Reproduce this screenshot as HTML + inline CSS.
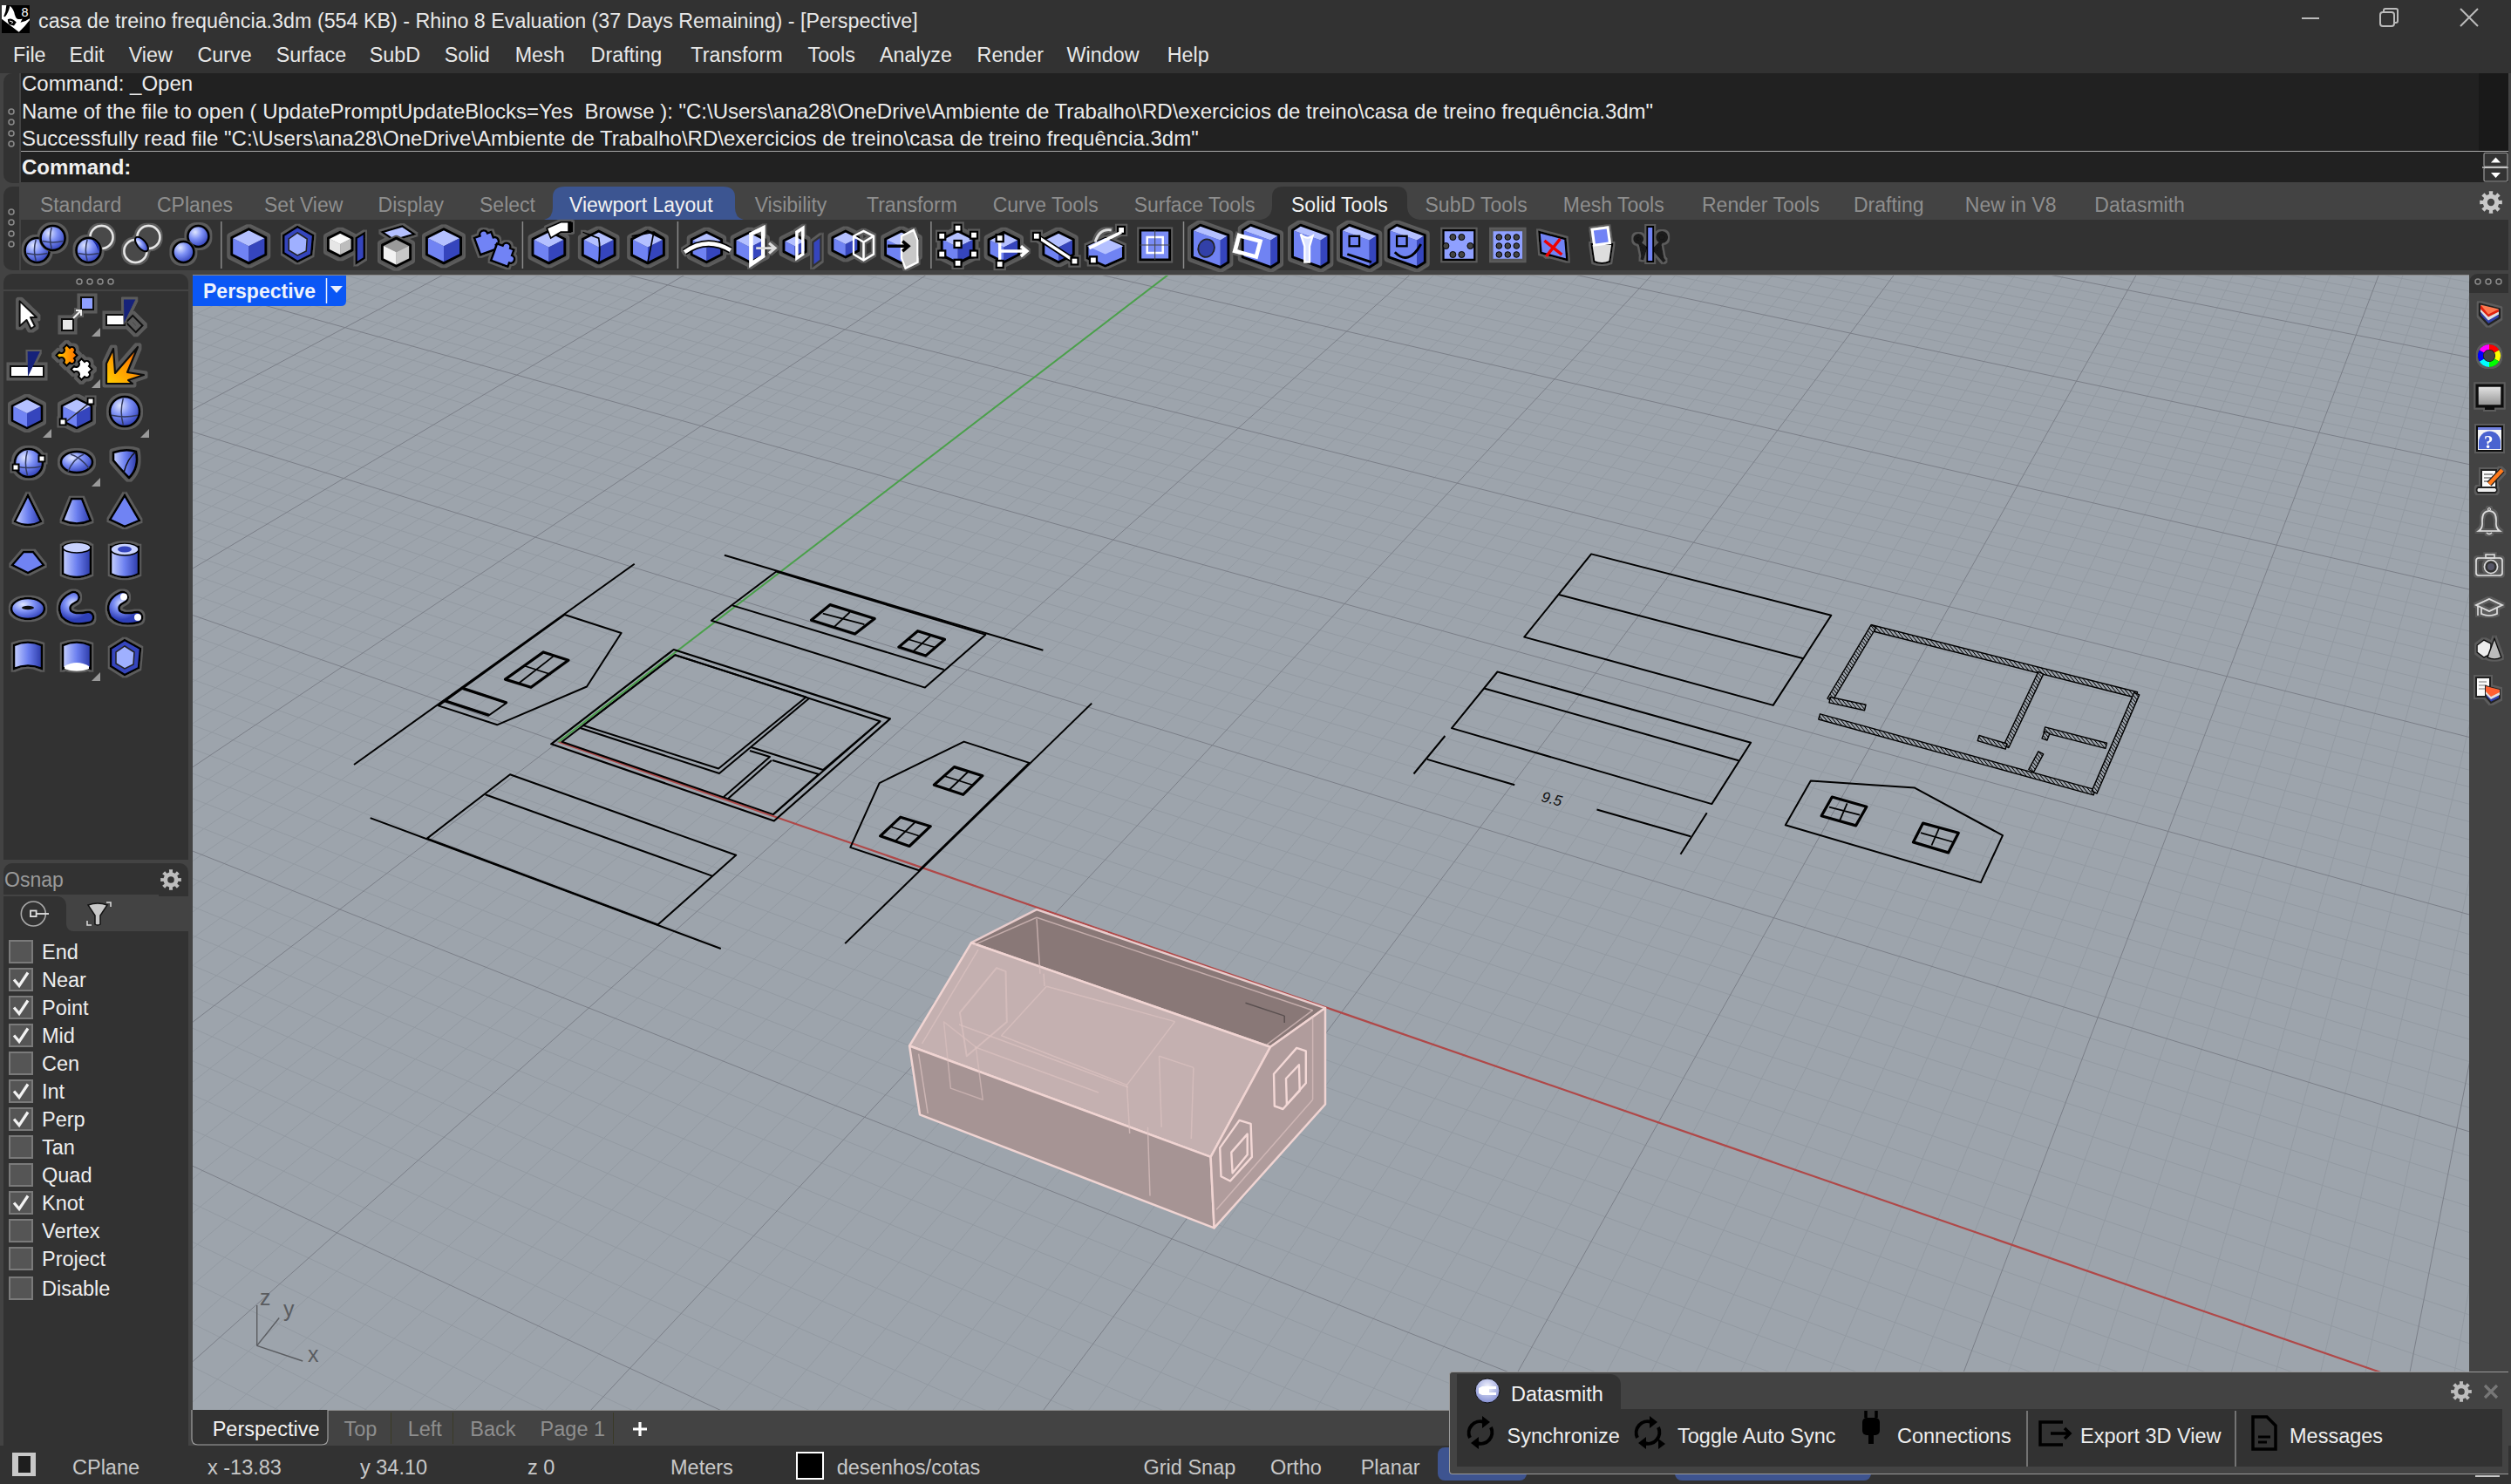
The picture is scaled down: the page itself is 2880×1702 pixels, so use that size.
<!DOCTYPE html><html><head><meta charset="utf-8"><style>html,body{margin:0;padding:0;width:2880px;height:1702px;overflow:hidden;background:#434343;font-family:"Liberation Sans", sans-serif;}div,svg{box-sizing:border-box}</style></head><body>
<div style="position:absolute;left:0px;top:0px;width:2880px;height:84px;background:#323232;"></div>
<svg style="position:absolute;left:2px;top:6px;" width="32" height="32" viewBox="0 0 32 32"><rect width="32" height="32" fill="#000"/><path d="M0 15.8 L0 0 H5.3 Q5 7 2.3 12.8 Q3 13.6 4 13 Q7.5 9 9.5 0.8 Q14 5 14.9 10.8 Q16 14.5 17.2 15.2 Q19.5 16.8 23.7 15.5 L21.5 19.8 Q27 19 32 15.3 V17 Q27 24 19.7 30.8 Z" fill="#fff"/><path d="M6.8 16.2 Q11 13.6 16.8 19.4 L14 23.6 Q11 22.6 8.6 22 Q6.8 19.5 6.8 16.2Z" fill="#000"/><path d="M9 18 L12.6 19.2 L11.5 21" stroke="#fff" stroke-width="1" fill="none"/><text x="22.6" y="12.6" font-size="14.5" fill="#fff" font-family="Liberation Sans">8</text></svg>
<div style="position:absolute;left:44px;top:8.0px;height:32px;line-height:32px;font-size:23.3px;color:#e8e8e8;font-weight:400;white-space:pre;">casa de treino frequência.3dm (554 KB) - Rhino 8 Evaluation (37 Days Remaining) - [Perspective]</div>
<svg style="position:absolute;left:2630px;top:8px;" width="230" height="30" viewBox="0 0 230 30"><line x1="10" y1="13" x2="30" y2="13" stroke="#bbb" stroke-width="2"/><rect x="100" y="6" width="16" height="16" rx="3" fill="none" stroke="#bbb" stroke-width="2"/><path d="M104 6 V4 Q104 2 106 2 H118 Q120 2 120 4 V16 Q120 18 118 18 H116" fill="none" stroke="#bbb" stroke-width="2"/><path d="M192 2 L212 22 M212 2 L192 22" stroke="#bbb" stroke-width="2"/></svg>
<div style="position:absolute;left:15px;top:47.0px;height:32px;line-height:32px;font-size:23.3px;color:#e8e8e8;font-weight:400;white-space:pre;">File</div>
<div style="position:absolute;left:79.4px;top:47.0px;height:32px;line-height:32px;font-size:23.3px;color:#e8e8e8;font-weight:400;white-space:pre;">Edit</div>
<div style="position:absolute;left:147.7px;top:47.0px;height:32px;line-height:32px;font-size:23.3px;color:#e8e8e8;font-weight:400;white-space:pre;">View</div>
<div style="position:absolute;left:226.5px;top:47.0px;height:32px;line-height:32px;font-size:23.3px;color:#e8e8e8;font-weight:400;white-space:pre;">Curve</div>
<div style="position:absolute;left:316.8px;top:47.0px;height:32px;line-height:32px;font-size:23.3px;color:#e8e8e8;font-weight:400;white-space:pre;">Surface</div>
<div style="position:absolute;left:423.8px;top:47.0px;height:32px;line-height:32px;font-size:23.3px;color:#e8e8e8;font-weight:400;white-space:pre;">SubD</div>
<div style="position:absolute;left:509.8px;top:47.0px;height:32px;line-height:32px;font-size:23.3px;color:#e8e8e8;font-weight:400;white-space:pre;">Solid</div>
<div style="position:absolute;left:590.7px;top:47.0px;height:32px;line-height:32px;font-size:23.3px;color:#e8e8e8;font-weight:400;white-space:pre;">Mesh</div>
<div style="position:absolute;left:677.6px;top:47.0px;height:32px;line-height:32px;font-size:23.3px;color:#e8e8e8;font-weight:400;white-space:pre;">Drafting</div>
<div style="position:absolute;left:792.3px;top:47.0px;height:32px;line-height:32px;font-size:23.3px;color:#e8e8e8;font-weight:400;white-space:pre;">Transform</div>
<div style="position:absolute;left:926.5px;top:47.0px;height:32px;line-height:32px;font-size:23.3px;color:#e8e8e8;font-weight:400;white-space:pre;">Tools</div>
<div style="position:absolute;left:1009px;top:47.0px;height:32px;line-height:32px;font-size:23.3px;color:#e8e8e8;font-weight:400;white-space:pre;">Analyze</div>
<div style="position:absolute;left:1120.6px;top:47.0px;height:32px;line-height:32px;font-size:23.3px;color:#e8e8e8;font-weight:400;white-space:pre;">Render</div>
<div style="position:absolute;left:1223.6px;top:47.0px;height:32px;line-height:32px;font-size:23.3px;color:#e8e8e8;font-weight:400;white-space:pre;">Window</div>
<div style="position:absolute;left:1338.8px;top:47.0px;height:32px;line-height:32px;font-size:23.3px;color:#e8e8e8;font-weight:400;white-space:pre;">Help</div>
<div style="position:absolute;left:4px;top:84px;width:18px;height:126px;background:#323232;border-radius:10px 0 0 10px;"></div>
<div style="position:absolute;left:24px;top:84px;width:2853px;height:125px;background:#212121;"></div>
<svg style="position:absolute;left:8px;top:123.0px;" width="10" height="10" viewBox="0 0 10 10"><circle cx="5" cy="5" r="3" fill="none" stroke="#8a8a8a" stroke-width="1.5"/></svg>
<svg style="position:absolute;left:8px;top:135.3px;" width="10" height="10" viewBox="0 0 10 10"><circle cx="5" cy="5" r="3" fill="none" stroke="#8a8a8a" stroke-width="1.5"/></svg>
<svg style="position:absolute;left:8px;top:147.6px;" width="10" height="10" viewBox="0 0 10 10"><circle cx="5" cy="5" r="3" fill="none" stroke="#8a8a8a" stroke-width="1.5"/></svg>
<svg style="position:absolute;left:8px;top:159.9px;" width="10" height="10" viewBox="0 0 10 10"><circle cx="5" cy="5" r="3" fill="none" stroke="#8a8a8a" stroke-width="1.5"/></svg>
<div style="position:absolute;left:25px;top:78.8px;height:33px;line-height:33px;font-size:24px;color:#ececec;font-weight:400;white-space:pre;">Command: _Open</div>
<div style="position:absolute;left:25px;top:110.5px;height:33px;line-height:33px;font-size:24px;color:#ececec;font-weight:400;white-space:pre;">Name of the file to open ( UpdatePromptUpdateBlocks=Yes  Browse ): &quot;C:\Users\ana28\OneDrive\Ambiente de Trabalho\RD\exercicios de treino\casa de treino frequência.3dm&quot;</div>
<div style="position:absolute;left:25px;top:141.9px;height:33px;line-height:33px;font-size:24px;color:#ececec;font-weight:400;white-space:pre;">Successfully read file &quot;C:\Users\ana28\OneDrive\Ambiente de Trabalho\RD\exercicios de treino\casa de treino frequência.3dm&quot;</div>
<div style="position:absolute;left:24px;top:173px;width:2853px;height:1px;background:#a8a8a8;"></div>
<div style="position:absolute;left:25px;top:175.2px;height:33px;line-height:33px;font-size:24px;color:#f0f0f0;font-weight:700;white-space:pre;">Command:</div>
<div style="position:absolute;left:2843px;top:84px;width:34px;height:89px;background:#191919;"></div>
<svg style="position:absolute;left:2846px;top:174px;" width="34" height="36" viewBox="0 0 34 36"><rect x="3" y="1.5" width="27" height="15.5" rx="1.5" fill="#333" stroke="#9a9a9a" stroke-width="1.2"/><rect x="3" y="18.5" width="27" height="15.5" rx="1.5" fill="#333" stroke="#9a9a9a" stroke-width="1.2"/><line x1="1" y1="18" x2="31" y2="18" stroke="#e8e8e8" stroke-width="1.3"/><path d="M11 12.5 L16.5 6.5 L22 12.5Z" fill="#fff"/><path d="M11 24 L16.5 30 L22 24Z" fill="#fff"/></svg>
<div style="position:absolute;left:4px;top:214px;width:18px;height:96px;background:#323232;border-radius:10px 0 0 10px;"></div>
<svg style="position:absolute;left:8px;top:238.0px;" width="10" height="10" viewBox="0 0 10 10"><circle cx="5" cy="5" r="3" fill="none" stroke="#8a8a8a" stroke-width="1.5"/></svg>
<svg style="position:absolute;left:8px;top:250.3px;" width="10" height="10" viewBox="0 0 10 10"><circle cx="5" cy="5" r="3" fill="none" stroke="#8a8a8a" stroke-width="1.5"/></svg>
<svg style="position:absolute;left:8px;top:262.6px;" width="10" height="10" viewBox="0 0 10 10"><circle cx="5" cy="5" r="3" fill="none" stroke="#8a8a8a" stroke-width="1.5"/></svg>
<svg style="position:absolute;left:8px;top:274.9px;" width="10" height="10" viewBox="0 0 10 10"><circle cx="5" cy="5" r="3" fill="none" stroke="#8a8a8a" stroke-width="1.5"/></svg>
<div style="position:absolute;left:24px;top:252px;width:2853px;height:58px;background:#323232;"></div>
<svg style="position:absolute;left:600px;top:214px;" width="270" height="38" viewBox="0 0 270 38"><path d="M24 38 Q34 36 34 24 V12 Q34 0 48 0 H229 Q243 0 243 12 V24 Q243 36 253 38 Z" fill="#3c5591"/></svg>
<svg style="position:absolute;left:1440px;top:214px;" width="190" height="38" viewBox="0 0 190 38"><path d="M6 38 Q19 36 19 22 V12 Q19 0 32 0 H162 Q174 0 174 12 V22 Q174 36 188 38 Z" fill="#323232"/></svg>
<div style="position:absolute;left:45.9px;top:219.1px;height:32px;line-height:32px;font-size:23px;color:#8e8e8e;font-weight:400;white-space:pre;">Standard</div>
<div style="position:absolute;left:180px;top:219.1px;height:32px;line-height:32px;font-size:23px;color:#8e8e8e;font-weight:400;white-space:pre;">CPlanes</div>
<div style="position:absolute;left:303px;top:219.1px;height:32px;line-height:32px;font-size:23px;color:#8e8e8e;font-weight:400;white-space:pre;">Set View</div>
<div style="position:absolute;left:433.6px;top:219.1px;height:32px;line-height:32px;font-size:23px;color:#8e8e8e;font-weight:400;white-space:pre;">Display</div>
<div style="position:absolute;left:550px;top:219.1px;height:32px;line-height:32px;font-size:23px;color:#8e8e8e;font-weight:400;white-space:pre;">Select</div>
<div style="position:absolute;left:653px;top:219.1px;height:32px;line-height:32px;font-size:23px;color:#f2f2f2;font-weight:400;white-space:pre;">Viewport Layout</div>
<div style="position:absolute;left:865.7px;top:219.1px;height:32px;line-height:32px;font-size:23px;color:#8e8e8e;font-weight:400;white-space:pre;">Visibility</div>
<div style="position:absolute;left:994px;top:219.1px;height:32px;line-height:32px;font-size:23px;color:#8e8e8e;font-weight:400;white-space:pre;">Transform</div>
<div style="position:absolute;left:1138.7px;top:219.1px;height:32px;line-height:32px;font-size:23px;color:#8e8e8e;font-weight:400;white-space:pre;">Curve Tools</div>
<div style="position:absolute;left:1300.7px;top:219.1px;height:32px;line-height:32px;font-size:23px;color:#8e8e8e;font-weight:400;white-space:pre;">Surface Tools</div>
<div style="position:absolute;left:1481px;top:219.1px;height:32px;line-height:32px;font-size:23px;color:#f2f2f2;font-weight:400;white-space:pre;">Solid Tools</div>
<div style="position:absolute;left:1634.5px;top:219.1px;height:32px;line-height:32px;font-size:23px;color:#8e8e8e;font-weight:400;white-space:pre;">SubD Tools</div>
<div style="position:absolute;left:1792.8px;top:219.1px;height:32px;line-height:32px;font-size:23px;color:#8e8e8e;font-weight:400;white-space:pre;">Mesh Tools</div>
<div style="position:absolute;left:1952px;top:219.1px;height:32px;line-height:32px;font-size:23px;color:#8e8e8e;font-weight:400;white-space:pre;">Render Tools</div>
<div style="position:absolute;left:2126px;top:219.1px;height:32px;line-height:32px;font-size:23px;color:#8e8e8e;font-weight:400;white-space:pre;">Drafting</div>
<div style="position:absolute;left:2253.8px;top:219.1px;height:32px;line-height:32px;font-size:23px;color:#8e8e8e;font-weight:400;white-space:pre;">New in V8</div>
<div style="position:absolute;left:2402.3px;top:219.1px;height:32px;line-height:32px;font-size:23px;color:#8e8e8e;font-weight:400;white-space:pre;">Datasmith</div>
<svg style="position:absolute;left:2837px;top:212px;" width="40" height="40" viewBox="0 0 40 40"><path d="M32.80 17.71 L32.80 22.29 L29.14 22.01 L27.88 25.05 L30.67 27.43 L27.43 30.67 L25.05 27.88 L22.01 29.14 L22.29 32.80 L17.71 32.80 L17.99 29.14 L14.95 27.88 L12.57 30.67 L9.33 27.43 L12.12 25.05 L10.86 22.01 L7.20 22.29 L7.20 17.71 L10.86 17.99 L12.12 14.95 L9.33 12.57 L12.57 9.33 L14.95 12.12 L17.99 10.86 L17.71 7.20 L22.29 7.20 L22.01 10.86 L25.05 12.12 L27.43 9.33 L30.67 12.57 L27.88 14.95 L29.14 17.99Z" fill="#c8c8c8"/><circle cx="20" cy="20" r="4.16" fill="#434343"/></svg>
<svg style="position:absolute;left:221px;top:316px;overflow:hidden;" width="2611" height="1301" viewBox="0 0 2611 1301"><defs><pattern id="hatch" width="3.2" height="3.2" patternUnits="userSpaceOnUse" patternTransform="rotate(-40)"><rect width="3.2" height="3.2" fill="#9da4ac"/><line x1="0" y1="0" x2="0" y2="3.2" stroke="#000" stroke-width="1.7"/></pattern></defs><rect x="0" y="0" width="2611" height="1301" fill="#9da4ac"/><g stroke="#939aa2" stroke-width="1"><line x1="-1623.5" y1="625.4" x2="714.4" y2="-431.8"/><line x1="-1605.8" y1="635.2" x2="728.7" y2="-429.3"/><line x1="-1588.0" y1="645.1" x2="743.1" y2="-426.8"/><line x1="-1570.0" y1="655.2" x2="757.5" y2="-424.3"/><line x1="-1551.8" y1="665.3" x2="772.0" y2="-421.8"/><line x1="-1533.4" y1="675.5" x2="786.6" y2="-419.3"/><line x1="-1514.9" y1="685.8" x2="801.3" y2="-416.8"/><line x1="-1496.2" y1="696.2" x2="816.0" y2="-414.3"/><line x1="-1477.3" y1="706.7" x2="830.8" y2="-411.7"/><line x1="-1439.0" y1="728.0" x2="860.6" y2="-406.6"/><line x1="-1419.5" y1="738.8" x2="875.6" y2="-404.0"/><line x1="-1399.9" y1="749.7" x2="890.7" y2="-401.4"/><line x1="-1380.1" y1="760.7" x2="905.8" y2="-398.8"/><line x1="-1360.1" y1="771.9" x2="921.0" y2="-396.2"/><line x1="-1339.8" y1="783.1" x2="936.3" y2="-393.6"/><line x1="-1319.4" y1="794.5" x2="951.7" y2="-391.0"/><line x1="-1298.8" y1="805.9" x2="967.1" y2="-388.3"/><line x1="-1278.0" y1="817.5" x2="982.6" y2="-385.6"/><line x1="-1235.6" y1="841.1" x2="1013.9" y2="-380.3"/><line x1="-1214.2" y1="853.0" x2="1029.6" y2="-377.5"/><line x1="-1192.5" y1="865.1" x2="1045.5" y2="-374.8"/><line x1="-1170.5" y1="877.3" x2="1061.4" y2="-372.1"/><line x1="-1148.4" y1="889.6" x2="1077.3" y2="-369.3"/><line x1="-1126.0" y1="902.0" x2="1093.4" y2="-366.6"/><line x1="-1103.4" y1="914.6" x2="1109.5" y2="-363.8"/><line x1="-1080.5" y1="927.3" x2="1125.7" y2="-361.0"/><line x1="-1057.4" y1="940.2" x2="1142.0" y2="-358.2"/><line x1="-1010.4" y1="966.3" x2="1174.9" y2="-352.6"/><line x1="-986.6" y1="979.6" x2="1191.4" y2="-349.7"/><line x1="-962.4" y1="993.0" x2="1208.0" y2="-346.9"/><line x1="-938.1" y1="1006.5" x2="1224.7" y2="-344.0"/><line x1="-913.4" y1="1020.2" x2="1241.5" y2="-341.1"/><line x1="-888.5" y1="1034.1" x2="1258.4" y2="-338.2"/><line x1="-863.3" y1="1048.1" x2="1275.4" y2="-335.3"/><line x1="-837.8" y1="1062.3" x2="1292.4" y2="-332.4"/><line x1="-812.0" y1="1076.6" x2="1309.6" y2="-329.4"/><line x1="-759.6" y1="1105.8" x2="1344.1" y2="-323.5"/><line x1="-732.9" y1="1120.6" x2="1361.5" y2="-320.5"/><line x1="-706.0" y1="1135.6" x2="1379.0" y2="-317.5"/><line x1="-678.7" y1="1150.7" x2="1396.6" y2="-314.4"/><line x1="-651.1" y1="1166.1" x2="1414.3" y2="-311.4"/><line x1="-623.2" y1="1181.6" x2="1432.0" y2="-308.3"/><line x1="-594.9" y1="1197.3" x2="1449.9" y2="-305.3"/><line x1="-566.4" y1="1213.2" x2="1467.8" y2="-302.2"/><line x1="-537.4" y1="1229.3" x2="1485.9" y2="-299.1"/><line x1="-478.6" y1="1262.0" x2="1522.3" y2="-292.8"/><line x1="-448.6" y1="1278.7" x2="1540.6" y2="-289.7"/><line x1="-418.2" y1="1295.6" x2="1559.0" y2="-286.5"/><line x1="-387.5" y1="1312.7" x2="1577.5" y2="-283.3"/><line x1="-356.4" y1="1330.0" x2="1596.2" y2="-280.1"/><line x1="-324.9" y1="1347.5" x2="1614.9" y2="-276.9"/><line x1="-293.0" y1="1365.2" x2="1633.7" y2="-273.7"/><line x1="-260.8" y1="1383.1" x2="1652.7" y2="-270.4"/><line x1="-228.1" y1="1401.3" x2="1671.7" y2="-267.1"/><line x1="-161.4" y1="1438.4" x2="1710.0" y2="-260.5"/><line x1="-127.5" y1="1457.3" x2="1729.4" y2="-257.2"/><line x1="-93.1" y1="1476.4" x2="1748.8" y2="-253.9"/><line x1="-58.2" y1="1495.8" x2="1768.4" y2="-250.5"/><line x1="-22.9" y1="1515.4" x2="1788.0" y2="-247.1"/><line x1="12.9" y1="1535.3" x2="1807.8" y2="-243.7"/><line x1="49.1" y1="1555.5" x2="1827.7" y2="-240.3"/><line x1="85.9" y1="1575.9" x2="1847.7" y2="-236.9"/><line x1="123.1" y1="1596.6" x2="1867.7" y2="-233.4"/><line x1="199.1" y1="1638.9" x2="1908.3" y2="-226.4"/><line x1="237.9" y1="1660.5" x2="1928.7" y2="-222.9"/><line x1="277.3" y1="1682.3" x2="1949.2" y2="-219.4"/><line x1="317.1" y1="1704.5" x2="1969.9" y2="-215.8"/><line x1="357.6" y1="1727.0" x2="1990.7" y2="-212.3"/><line x1="398.6" y1="1749.8" x2="2011.6" y2="-208.7"/><line x1="440.2" y1="1772.9" x2="2032.6" y2="-205.1"/><line x1="482.4" y1="1796.4" x2="2053.7" y2="-201.4"/><line x1="525.2" y1="1820.2" x2="2075.0" y2="-197.8"/><line x1="612.8" y1="1868.9" x2="2117.8" y2="-190.4"/><line x1="657.5" y1="1893.8" x2="2139.4" y2="-186.7"/><line x1="702.9" y1="1919.0" x2="2161.2" y2="-183.0"/><line x1="749.0" y1="1944.6" x2="2183.0" y2="-179.2"/><line x1="795.8" y1="1970.7" x2="2205.0" y2="-175.4"/><line x1="843.3" y1="1997.1" x2="2227.2" y2="-171.6"/><line x1="891.5" y1="2023.9" x2="2249.4" y2="-167.8"/><line x1="940.5" y1="2051.1" x2="2271.8" y2="-163.9"/><line x1="990.2" y1="2078.8" x2="2294.3" y2="-160.1"/><line x1="1092.1" y1="2135.4" x2="2339.7" y2="-152.3"/><line x1="1144.3" y1="2164.4" x2="2362.6" y2="-148.3"/><line x1="1197.3" y1="2193.9" x2="2385.7" y2="-144.3"/><line x1="1251.1" y1="2223.9" x2="2408.8" y2="-140.4"/><line x1="1305.9" y1="2254.3" x2="2432.2" y2="-136.4"/><line x1="1361.5" y1="2285.2" x2="2455.6" y2="-132.3"/><line x1="1418.1" y1="2316.7" x2="2479.2" y2="-128.3"/><line x1="1475.6" y1="2348.7" x2="2503.0" y2="-124.2"/><line x1="1534.1" y1="2381.2" x2="2526.8" y2="-120.1"/><line x1="1654.2" y1="2448.0" x2="2575.1" y2="-111.8"/><line x1="1715.8" y1="2482.2" x2="2599.4" y2="-107.6"/><line x1="1778.4" y1="2517.1" x2="2623.8" y2="-103.4"/><line x1="1842.2" y1="2552.5" x2="2648.5" y2="-99.2"/><line x1="1907.1" y1="2588.6" x2="2673.2" y2="-94.9"/><line x1="1973.2" y1="2625.4" x2="2698.2" y2="-90.6"/><line x1="2040.5" y1="2662.8" x2="2723.2" y2="-86.3"/><line x1="2109.0" y1="2700.9" x2="2748.5" y2="-82.0"/><line x1="2178.8" y1="2739.7" x2="2773.9" y2="-77.6"/><line x1="2322.4" y1="2819.5" x2="2825.1" y2="-68.8"/><line x1="2396.2" y1="2860.6" x2="2851.0" y2="-64.3"/><line x1="2471.4" y1="2902.4" x2="2877.0" y2="-59.9"/><line x1="2548.1" y1="2945.1" x2="2903.2" y2="-55.3"/><line x1="2626.4" y1="2988.6" x2="2929.6" y2="-50.8"/><line x1="2706.1" y1="3032.9" x2="2956.1" y2="-46.2"/><line x1="2787.5" y1="3078.2" x2="2982.8" y2="-41.7"/><line x1="2870.5" y1="3124.3" x2="3009.7" y2="-37.0"/><line x1="2955.2" y1="3171.4" x2="3036.7" y2="-32.4"/><line x1="-1599.1" y1="596.9" x2="3042.3" y2="3126.7"/><line x1="-1557.9" y1="578.4" x2="3042.9" y2="3037.4"/><line x1="-1517.5" y1="560.3" x2="3043.5" y2="2951.6"/><line x1="-1477.8" y1="542.4" x2="3044.0" y2="2868.9"/><line x1="-1438.7" y1="524.9" x2="3044.6" y2="2789.3"/><line x1="-1400.3" y1="507.7" x2="3045.1" y2="2712.4"/><line x1="-1362.6" y1="490.8" x2="3045.6" y2="2638.3"/><line x1="-1325.4" y1="474.1" x2="3046.1" y2="2566.8"/><line x1="-1288.9" y1="457.8" x2="3046.6" y2="2497.7"/><line x1="-1217.7" y1="425.8" x2="3047.5" y2="2366.3"/><line x1="-1183.0" y1="410.3" x2="3047.9" y2="2303.8"/><line x1="-1148.8" y1="394.9" x2="3048.3" y2="2243.3"/><line x1="-1115.2" y1="379.9" x2="3048.7" y2="2184.7"/><line x1="-1082.1" y1="365.0" x2="3049.1" y2="2127.8"/><line x1="-1049.5" y1="350.4" x2="3049.5" y2="2072.8"/><line x1="-1017.4" y1="336.0" x2="3049.9" y2="2019.3"/><line x1="-985.8" y1="321.8" x2="3050.2" y2="1967.5"/><line x1="-954.7" y1="307.9" x2="3050.6" y2="1917.1"/><line x1="-893.9" y1="280.6" x2="3051.2" y2="1820.6"/><line x1="-864.2" y1="267.3" x2="3051.6" y2="1774.4"/><line x1="-834.9" y1="254.2" x2="3051.9" y2="1729.5"/><line x1="-806.1" y1="241.2" x2="3052.2" y2="1685.8"/><line x1="-777.7" y1="228.5" x2="3052.5" y2="1643.2"/><line x1="-749.7" y1="215.9" x2="3052.7" y2="1601.8"/><line x1="-722.1" y1="203.6" x2="3053.0" y2="1561.4"/><line x1="-694.9" y1="191.4" x2="3053.3" y2="1522.1"/><line x1="-668.0" y1="179.3" x2="3053.5" y2="1483.8"/><line x1="-615.5" y1="155.8" x2="3054.1" y2="1410.0"/><line x1="-589.8" y1="144.3" x2="3054.3" y2="1374.4"/><line x1="-564.5" y1="132.9" x2="3054.5" y2="1339.8"/><line x1="-539.5" y1="121.7" x2="3054.8" y2="1305.9"/><line x1="-514.8" y1="110.6" x2="3055.0" y2="1272.8"/><line x1="-490.5" y1="99.7" x2="3055.2" y2="1240.5"/><line x1="-466.5" y1="89.0" x2="3055.4" y2="1209.0"/><line x1="-442.8" y1="78.3" x2="3055.6" y2="1178.2"/><line x1="-419.5" y1="67.9" x2="3055.9" y2="1148.0"/><line x1="-373.7" y1="47.3" x2="3056.3" y2="1089.8"/><line x1="-351.2" y1="37.3" x2="3056.4" y2="1061.6"/><line x1="-329.0" y1="27.3" x2="3056.6" y2="1034.0"/><line x1="-307.2" y1="17.5" x2="3056.8" y2="1007.0"/><line x1="-285.6" y1="7.8" x2="3057.0" y2="980.6"/><line x1="-264.2" y1="-1.7" x2="3057.2" y2="954.7"/><line x1="-243.2" y1="-11.2" x2="3057.4" y2="929.4"/><line x1="-222.4" y1="-20.5" x2="3057.5" y2="904.5"/><line x1="-201.9" y1="-29.7" x2="3057.7" y2="880.2"/><line x1="-161.5" y1="-47.8" x2="3058.0" y2="833.0"/><line x1="-141.8" y1="-56.7" x2="3058.2" y2="810.1"/><line x1="-122.2" y1="-65.4" x2="3058.3" y2="787.7"/><line x1="-102.9" y1="-74.1" x2="3058.5" y2="765.7"/><line x1="-83.8" y1="-82.6" x2="3058.6" y2="744.1"/><line x1="-65.0" y1="-91.1" x2="3058.8" y2="722.9"/><line x1="-46.4" y1="-99.4" x2="3058.9" y2="702.1"/><line x1="-28.0" y1="-107.7" x2="3059.1" y2="681.7"/><line x1="-9.8" y1="-115.9" x2="3059.2" y2="661.6"/><line x1="26.0" y1="-131.9" x2="3059.5" y2="622.7"/><line x1="43.5" y1="-139.8" x2="3059.6" y2="603.7"/><line x1="60.9" y1="-147.5" x2="3059.7" y2="585.1"/><line x1="78.1" y1="-155.2" x2="3059.8" y2="566.7"/><line x1="95.0" y1="-162.9" x2="3060.0" y2="548.8"/><line x1="111.8" y1="-170.4" x2="3060.1" y2="531.1"/><line x1="128.4" y1="-177.8" x2="3060.2" y2="513.7"/><line x1="144.8" y1="-185.2" x2="3060.3" y2="496.6"/><line x1="161.1" y1="-192.5" x2="3060.4" y2="479.8"/><line x1="193.0" y1="-206.8" x2="3060.7" y2="447.1"/><line x1="208.7" y1="-213.8" x2="3060.8" y2="431.1"/><line x1="224.2" y1="-220.8" x2="3060.9" y2="415.4"/><line x1="239.6" y1="-227.7" x2="3061.0" y2="399.9"/><line x1="254.7" y1="-234.5" x2="3061.1" y2="384.7"/><line x1="269.8" y1="-241.2" x2="3061.2" y2="369.8"/><line x1="284.7" y1="-247.9" x2="3061.3" y2="355.0"/><line x1="299.4" y1="-254.5" x2="3061.4" y2="340.5"/><line x1="313.9" y1="-261.0" x2="3061.5" y2="326.3"/><line x1="342.6" y1="-273.9" x2="3061.7" y2="298.4"/><line x1="356.7" y1="-280.2" x2="3061.8" y2="284.7"/><line x1="370.7" y1="-286.5" x2="3061.9" y2="271.3"/><line x1="384.5" y1="-292.7" x2="3062.0" y2="258.1"/><line x1="398.2" y1="-298.8" x2="3062.0" y2="245.0"/><line x1="411.7" y1="-304.9" x2="3062.1" y2="232.2"/><line x1="425.1" y1="-310.9" x2="3062.2" y2="219.6"/><line x1="438.4" y1="-316.8" x2="3062.3" y2="207.1"/><line x1="451.6" y1="-322.7" x2="3062.4" y2="194.8"/><line x1="477.5" y1="-334.3" x2="3062.6" y2="170.8"/><line x1="490.2" y1="-340.1" x2="3062.6" y2="159.0"/><line x1="502.9" y1="-345.7" x2="3062.7" y2="147.4"/><line x1="515.4" y1="-351.3" x2="3062.8" y2="135.9"/><line x1="527.8" y1="-356.9" x2="3062.9" y2="124.6"/><line x1="540.0" y1="-362.4" x2="3063.0" y2="113.5"/><line x1="552.2" y1="-367.8" x2="3063.0" y2="102.5"/><line x1="564.2" y1="-373.2" x2="3063.1" y2="91.7"/><line x1="576.1" y1="-378.6" x2="3063.2" y2="81.0"/><line x1="599.6" y1="-389.1" x2="3063.3" y2="60.1"/><line x1="611.2" y1="-394.3" x2="3063.4" y2="49.8"/><line x1="622.7" y1="-399.5" x2="3063.5" y2="39.7"/><line x1="634.1" y1="-404.6" x2="3063.5" y2="29.7"/><line x1="645.3" y1="-409.6" x2="3063.6" y2="19.8"/><line x1="656.5" y1="-414.6" x2="3063.7" y2="10.1"/><line x1="667.6" y1="-419.6" x2="3063.7" y2="0.4"/><line x1="678.5" y1="-424.5" x2="3063.8" y2="-9.1"/><line x1="689.4" y1="-429.4" x2="3063.9" y2="-18.4"/></g><g stroke="#7b7f88" stroke-width="1"><line x1="-1641.0" y1="615.7" x2="700.2" y2="-434.2"/><line x1="-1458.2" y1="717.3" x2="845.6" y2="-409.2"/><line x1="-1256.9" y1="829.2" x2="998.2" y2="-382.9"/><line x1="-1034.0" y1="953.2" x2="1158.4" y2="-355.4"/><line x1="-786.0" y1="1091.1" x2="1326.8" y2="-326.4"/><line x1="-508.2" y1="1245.6" x2="1504.0" y2="-296.0"/><line x1="-195.0" y1="1419.7" x2="1690.8" y2="-263.8"/><line x1="160.9" y1="1617.6" x2="1887.9" y2="-229.9"/><line x1="568.7" y1="1844.4" x2="2096.3" y2="-194.1"/><line x1="1040.8" y1="2106.9" x2="2316.9" y2="-156.2"/><line x1="1593.6" y1="2414.3" x2="2550.9" y2="-115.9"/><line x1="2249.9" y1="2779.3" x2="2799.4" y2="-73.2"/><line x1="3041.6" y1="3219.5" x2="3063.9" y2="-27.7"/><line x1="-1641.0" y1="615.7" x2="3041.6" y2="3219.5"/><line x1="-1253.0" y1="441.7" x2="3047.0" y2="2430.9"/><line x1="-924.1" y1="294.2" x2="3050.9" y2="1868.2"/><line x1="-641.6" y1="167.5" x2="3053.8" y2="1446.4"/><line x1="-396.4" y1="57.5" x2="3056.1" y2="1118.6"/><line x1="-181.6" y1="-38.8" x2="3057.9" y2="856.4"/><line x1="8.2" y1="-123.9" x2="3059.3" y2="642.0"/><line x1="177.1" y1="-199.6" x2="3060.6" y2="463.3"/><line x1="328.3" y1="-267.5" x2="3061.6" y2="312.2"/><line x1="464.6" y1="-328.6" x2="3062.5" y2="182.7"/><line x1="587.9" y1="-383.9" x2="3063.2" y2="70.5"/><line x1="700.2" y1="-434.2" x2="3063.9" y2="-27.7"/></g><line x1="419.6" y1="534.8" x2="3053.8" y2="1446.4" stroke="#b04848" stroke-width="2.2" /><line x1="419.6" y1="534.8" x2="1504.0" y2="-296.0" stroke="#4aa04a" stroke-width="2" /><line x1="185.0" y1="561.0" x2="506.7" y2="330.8" stroke="#000" stroke-width="2" /><polygon points="281.9,493.4 426.7,389.0 491.6,410.0 452.0,471.5 349.2,515.3" fill="none" stroke="#000" stroke-width="2" stroke-linejoin="round" /><polygon points="358.5,463.1 402.3,431.9 430.9,441.2 388.0,472.3" fill="none" stroke="#000" stroke-width="3.2" stroke-linejoin="round" /><line x1="380.0" y1="447.5" x2="411.0" y2="457.5" stroke="#000" stroke-width="1.8" /><line x1="413.4" y1="436.9" x2="374.5" y2="467.3" stroke="#000" stroke-width="1.8" /><polygon points="288.6,487.5 308.8,473.2 360.2,490.0 340.0,504.3" fill="none" stroke="#000" stroke-width="2" stroke-linejoin="round" /><line x1="308.8" y1="473.2" x2="360.2" y2="490.0" stroke="#000" stroke-width="3.4" /><line x1="288.6" y1="487.5" x2="340.0" y2="504.3" stroke="#000" stroke-width="3.4" /><line x1="609.9" y1="320.7" x2="975.4" y2="429.8" stroke="#000" stroke-width="2" /><polygon points="594.9,395.7 669.3,339.5 909.3,411.9 839.9,472.6" fill="none" stroke="#000" stroke-width="2" stroke-linejoin="round" /><line x1="619.1" y1="378.4" x2="861.7" y2="452.0" stroke="#000" stroke-width="2" /><polygon points="709.5,395.2 731.2,377.6 782.2,393.5 759.6,411.0" fill="none" stroke="#000" stroke-width="3.2" stroke-linejoin="round" /><line x1="722.8" y1="387.6" x2="770.4" y2="400.2" stroke="#000" stroke-width="1.8" /><line x1="753.8" y1="386.0" x2="736.2" y2="402.7" stroke="#000" stroke-width="1.8" /><polygon points="809.8,426.1 831.6,407.7 862.5,417.4 840.7,436.1" fill="none" stroke="#000" stroke-width="3.2" stroke-linejoin="round" /><line x1="820.0" y1="417.0" x2="851.5" y2="426.5" stroke="#000" stroke-width="1.8" /><line x1="847.0" y1="412.5" x2="826.0" y2="431.5" stroke="#000" stroke-width="1.8" /><polygon points="411.2,537.3 551.7,429.0 799.9,508.4 666.8,625.5" fill="none" stroke="#000" stroke-width="2.2" stroke-linejoin="round" /><polygon points="423.5,534.8 553.3,435.2 788.5,511.2 666.0,618.1" fill="none" stroke="#000" stroke-width="2" stroke-linejoin="round" /><polygon points="448.0,516.0 553.3,435.2 703.5,483.4 603.1,565.5" fill="none" stroke="#000" stroke-width="2" stroke-linejoin="round" /><polyline points="444.7,519.0 604.0,571.0 707.0,485.0" fill="none" stroke="#000" stroke-width="2" stroke-linejoin="round" /><polyline points="640.5,541.0 723.0,567.0 788.5,511.2" fill="none" stroke="#000" stroke-width="2" stroke-linejoin="round" /><polyline points="639.0,545.0 662.0,552.0 609.0,598.0" fill="none" stroke="#000" stroke-width="2" stroke-linejoin="round" /><polyline points="665.0,556.0 718.0,572.0 666.0,618.1" fill="none" stroke="#000" stroke-width="2" stroke-linejoin="round" /><line x1="614.0" y1="600.0" x2="664.0" y2="556.0" stroke="#000" stroke-width="2" /><line x1="203.7" y1="622.1" x2="605.8" y2="772.0" stroke="#000" stroke-width="2" /><polygon points="268.8,645.6 364.0,572.3 623.2,664.8 533.5,744.5" fill="none" stroke="#000" stroke-width="2" stroke-linejoin="round" /><line x1="335.6" y1="595.2" x2="595.8" y2="688.6" stroke="#000" stroke-width="2" /><line x1="748.2" y1="766.1" x2="1031.2" y2="490.6" stroke="#000" stroke-width="2" /><polygon points="754.3,655.9 787.6,582.1 884.6,534.6 959.4,558.9 833.1,682.2" fill="none" stroke="#000" stroke-width="2" stroke-linejoin="round" /><polygon points="850.3,584.2 873.5,563.6 905.9,573.7 883.6,595.3" fill="none" stroke="#000" stroke-width="3.2" stroke-linejoin="round" /><line x1="862.0" y1="574.0" x2="895.0" y2="584.5" stroke="#000" stroke-width="1.8" /><line x1="890.0" y1="568.5" x2="867.0" y2="590.5" stroke="#000" stroke-width="1.8" /><polygon points="788.6,642.8 811.9,621.2 846.2,631.7 822.0,654.5" fill="none" stroke="#000" stroke-width="3.2" stroke-linejoin="round" /><line x1="800.0" y1="632.0" x2="834.0" y2="643.0" stroke="#000" stroke-width="1.8" /><line x1="829.0" y1="626.5" x2="805.0" y2="649.5" stroke="#000" stroke-width="1.8" /><polygon points="1527.2,414.6 1604.1,319.4 1879.3,389.8 1812.7,492.9" fill="none" stroke="#000" stroke-width="2" stroke-linejoin="round" /><line x1="1566.9" y1="366.0" x2="1847.3" y2="439.2" stroke="#000" stroke-width="2" /><polygon points="1444.0,519.1 1496.5,454.5 1787.1,535.7 1742.3,606.1" fill="none" stroke="#000" stroke-width="2" stroke-linejoin="round" /><line x1="1481.2" y1="473.5" x2="1773.0" y2="556.2" stroke="#000" stroke-width="2" /><line x1="1400.5" y1="571.5" x2="1436.4" y2="528.0" stroke="#000" stroke-width="2" /><line x1="1415.9" y1="554.9" x2="1516.2" y2="584.3" stroke="#000" stroke-width="2" /><line x1="1610.5" y1="612.5" x2="1718.0" y2="643.2" stroke="#000" stroke-width="2" /><line x1="1706.5" y1="663.7" x2="1736.7" y2="616.3" stroke="#000" stroke-width="2" /><text x="1547" y="607" font-size="17" font-style="italic" fill="#111" transform="rotate(14 1563 601)">9.5</text><polygon points="1924.2,407.2 2228.9,484.2 2230.5,477.8 1925.8,400.8" fill="url(#hatch)" stroke="#000" stroke-width="1.4" stroke-linejoin="round" /><polygon points="1925.1,400.6 1874.9,485.0 1880.5,488.4 1930.7,404.0" fill="url(#hatch)" stroke="#000" stroke-width="1.4" stroke-linejoin="round" /><polygon points="1877.0,489.9 1917.6,498.7 1919.0,492.3 1878.4,483.5" fill="url(#hatch)" stroke="#000" stroke-width="1.4" stroke-linejoin="round" /><polygon points="1864.8,509.0 2180.2,595.8 2182.0,589.6 1866.6,502.8" fill="url(#hatch)" stroke="#000" stroke-width="1.4" stroke-linejoin="round" /><polygon points="2226.7,478.3 2178.1,591.4 2184.1,594.0 2232.7,480.9" fill="url(#hatch)" stroke="#000" stroke-width="1.4" stroke-linejoin="round" /><polygon points="2116.9,454.3 2077.1,538.7 2082.9,541.5 2122.7,457.1" fill="url(#hatch)" stroke="#000" stroke-width="1.4" stroke-linejoin="round" /><polygon points="2080.9,537.0 2049.0,527.5 2047.2,533.7 2079.1,543.2" fill="url(#hatch)" stroke="#000" stroke-width="1.4" stroke-linejoin="round" /><polygon points="2123.0,524.1 2193.9,542.4 2195.5,536.2 2124.6,517.9" fill="url(#hatch)" stroke="#000" stroke-width="1.4" stroke-linejoin="round" /><polygon points="2124.0,522.9 2121.0,530.9 2127.0,533.1 2130.0,525.1" fill="url(#hatch)" stroke="#000" stroke-width="1.4" stroke-linejoin="round" /><polygon points="2116.9,545.8 2105.8,566.5 2111.6,569.5 2122.7,548.8" fill="url(#hatch)" stroke="#000" stroke-width="1.4" stroke-linejoin="round" /><polygon points="1826.8,630.3 1855.8,579.6 1975.1,587.6 2076.0,642.1 2050.9,696.1" fill="none" stroke="#000" stroke-width="2" stroke-linejoin="round" /><polygon points="1868.1,619.8 1880.3,598.0 1919.9,609.2 1907.6,630.9" fill="none" stroke="#000" stroke-width="3.2" stroke-linejoin="round" /><line x1="1877.0" y1="609.7" x2="1912.0" y2="618.6" stroke="#000" stroke-width="1.8" /><line x1="1897.6" y1="605.3" x2="1889.2" y2="624.8" stroke="#000" stroke-width="1.8" /><polygon points="1973.4,649.9 1984.6,628.1 2025.3,639.3 2013.6,661.9" fill="none" stroke="#000" stroke-width="3.2" stroke-linejoin="round" /><line x1="1982.0" y1="639.2" x2="2020.0" y2="650.0" stroke="#000" stroke-width="1.8" /><line x1="2003.0" y1="634.0" x2="1994.5" y2="653.5" stroke="#000" stroke-width="1.8" /><polygon points="968.0,727.1 1299.0,840.1 1236.0,884.8 893.1,765.2" fill="#897877" stroke="#e8cccc" stroke-width="2.5" stroke-linejoin="round" /><polygon points="893.1,765.2 1236.0,884.8 1167.6,1010.9 822.1,883.5" fill="#c4b0b0" stroke="#f0d4d2" stroke-width="2.5" stroke-linejoin="round" /><polygon points="822.1,883.5 1167.6,1010.9 1171.6,1092.3 834.0,962.3" fill="#a69494" stroke="#f0d4d2" stroke-width="2.5" stroke-linejoin="round" /><polygon points="1236.0,884.8 1299.0,840.1 1299.0,950.5 1171.6,1092.3 1167.6,1010.9" fill="#b09c9c" stroke="#f0d4d2" stroke-width="2.5" stroke-linejoin="round" /><line x1="895.7" y1="767.9" x2="968.0" y2="736.3" stroke="#dcc2c0" stroke-width="1.5" stroke-opacity="0.7"/><line x1="968.0" y1="736.3" x2="1284.6" y2="842.7" stroke="#dcc2c0" stroke-width="1.5" stroke-opacity="0.7"/><line x1="1284.6" y1="842.7" x2="1232.0" y2="882.2" stroke="#dcc2c0" stroke-width="1.5" stroke-opacity="0.7"/><line x1="901.0" y1="773.1" x2="836.6" y2="880.8" stroke="#dcc2c0" stroke-width="1.5" stroke-opacity="0.7"/><line x1="1095.4" y1="976.7" x2="1098.0" y2="1055.6" stroke="#dcc2c0" stroke-width="1.5" stroke-opacity="0.7"/><line x1="1108.5" y1="895.3" x2="1111.2" y2="976.7" stroke="#dcc2c0" stroke-width="1.5" stroke-opacity="0.7"/><line x1="1108.5" y1="895.3" x2="1147.9" y2="908.4" stroke="#dcc2c0" stroke-width="1.5" stroke-opacity="0.7"/><line x1="832.6" y1="892.7" x2="843.2" y2="961.0" stroke="#dcc2c0" stroke-width="1.5" stroke-opacity="0.7"/><line x1="1284.6" y1="850.6" x2="1284.6" y2="945.2" stroke="#dcc2c0" stroke-width="1.5" stroke-opacity="0.7"/><line x1="1284.6" y1="945.2" x2="1174.2" y2="1071.3" stroke="#dcc2c0" stroke-width="1.5" stroke-opacity="0.7"/><line x1="1147.9" y1="908.4" x2="1145.3" y2="989.9" stroke="#dcc2c0" stroke-width="1.5" stroke-opacity="0.7"/><line x1="968.0" y1="737.6" x2="971.9" y2="800.7" stroke="#dcc2c0" stroke-width="1.5" stroke-opacity="0.7"/><line x1="979.3" y1="815.2" x2="1126.5" y2="855.6" stroke="#dcc2c0" stroke-width="1.5" stroke-opacity="0.7"/><line x1="979.3" y1="815.2" x2="927.5" y2="871.8" stroke="#dcc2c0" stroke-width="1.5" stroke-opacity="0.7"/><line x1="927.5" y1="871.8" x2="1071.5" y2="928.4" stroke="#dcc2c0" stroke-width="1.5" stroke-opacity="0.7"/><line x1="1071.5" y1="928.4" x2="1126.5" y2="855.6" stroke="#dcc2c0" stroke-width="1.5" stroke-opacity="0.7"/><line x1="1071.5" y1="928.4" x2="1074.7" y2="984.0" stroke="#dcc2c0" stroke-width="1.5" stroke-opacity="0.7"/><line x1="879.0" y1="859.0" x2="1073.0" y2="931.0" stroke="#dcc2c0" stroke-width="1.5" stroke-opacity="0.7"/><line x1="896.8" y1="884.7" x2="1039.0" y2="937.0" stroke="#dcc2c0" stroke-width="1.5" stroke-opacity="0.7"/><line x1="976.0" y1="800.6" x2="977.0" y2="815.0" stroke="#dcc2c0" stroke-width="1.5" stroke-opacity="0.7"/><polygon points="879.9,845.4 922.0,794.1 932.5,798.1 933.8,855.9 887.8,895.3" fill="none" stroke="#dcc2c0" stroke-width="2" stroke-linejoin="round" stroke-opacity="0.7"/><polygon points="861.5,855.9 869.4,932.1 906.2,945.2 898.3,884.8" fill="none" stroke="#dcc2c0" stroke-width="1.5" stroke-linejoin="round" stroke-opacity="0.6"/><line x1="1207.5" y1="834.2" x2="1252.2" y2="849.1" stroke="#5a5050" stroke-width="1.5" /><line x1="1252.2" y1="849.1" x2="1252.2" y2="857.0" stroke="#5a5050" stroke-width="1.5" /><polygon points="1240.0,915.7 1266.2,885.9 1276.8,889.4 1276.8,926.2 1250.5,956.0 1240.8,952.5" fill="none" stroke="#f3d8d6" stroke-width="2.4" stroke-linejoin="round" /><polygon points="1254.0,921.0 1268.9,905.2 1269.7,935.0 1254.9,950.7" fill="none" stroke="#f3d8d6" stroke-width="2.4" stroke-linejoin="round" /><polygon points="1178.2,1000.4 1200.5,968.9 1213.6,972.8 1214.9,1010.9 1190.0,1038.5 1179.5,1033.2" fill="none" stroke="#f3d8d6" stroke-width="2.4" stroke-linejoin="round" /><polygon points="1191.3,1005.6 1209.7,984.6 1209.7,1008.3 1192.6,1029.3" fill="none" stroke="#f3d8d6" stroke-width="2.4" stroke-linejoin="round" /><line x1="73.7" y1="1227.4" x2="73.7" y2="1181.0" stroke="#5a5c60" stroke-width="1.4" /><line x1="73.7" y1="1227.4" x2="126.2" y2="1245.0" stroke="#5a5c60" stroke-width="1.4" /><line x1="73.7" y1="1227.4" x2="99.2" y2="1195.5" stroke="#5a5c60" stroke-width="1.4" /><text x="132" y="1246" font-size="25" fill="#5a5c60">x</text><text x="77" y="1181" font-size="25" fill="#5a5c60">z</text><text x="104" y="1194" font-size="25" fill="#5a5c60">y</text></svg>
<div style="position:absolute;left:221px;top:315px;width:2611px;height:1px;background:#8a8a8a;"></div>
<svg style="position:absolute;left:221px;top:315px;" width="177" height="37" viewBox="0 0 177 37"><path d="M0 1 H176 V30 Q176 36 170 36 H0 Z" fill="#0a57f5"/><line x1="153.5" y1="4" x2="153.5" y2="33" stroke="#e8eefc" stroke-width="1.5"/><path d="M158 13 L172 13 L165 21 Z" fill="#e8eefc"/></svg>
<div style="position:absolute;left:233px;top:317.7px;height:32px;line-height:32px;font-size:23px;color:#eef2fb;font-weight:700;white-space:pre;">Perspective</div>
<svg style="position:absolute;left:0px;top:0px;" width="1" height="1" viewBox="0 0 1 1"><defs><radialGradient id="gs" cx="0.35" cy="0.3" r="0.75"><stop offset="0" stop-color="#dfe6ff"/><stop offset="0.45" stop-color="#7d90f5"/><stop offset="1" stop-color="#2f3fb8"/></radialGradient><linearGradient id="gc" x1="0" y1="0" x2="1" y2="0"><stop offset="0" stop-color="#c8d2ff"/><stop offset="0.5" stop-color="#6c80f0"/><stop offset="1" stop-color="#2c3aa8"/></linearGradient><filter id="halo" x="-20%" y="-20%" width="140%" height="140%"><feMorphology in="SourceAlpha" operator="dilate" radius="2.2" result="d"/><feFlood flood-color="#5c5c5c"/><feComposite in2="d" operator="in" result="h"/><feMerge><feMergeNode in="h"/><feMergeNode in="SourceGraphic"/></feMerge></filter><linearGradient id="go" x1="0" y1="1" x2="1" y2="0"><stop offset="0" stop-color="#ffd000"/><stop offset="1" stop-color="#ff5a00"/></linearGradient></defs></svg>
<svg style="position:absolute;left:0px;top:0px;" width="2000" height="320" viewBox="0 0 2000 320"><g filter="url(#halo)"><g transform="translate(51.6,280) scale(1.0) translate(-28,-28)"><circle cx="19" cy="35" r="16" fill="#555"/><circle cx="19" cy="35" r="14" fill="url(#gs)" stroke="#000" stroke-width="2.5"/><path d="M7 38.5 Q19 41.3 31 38.5" fill="none" stroke="#333a60" stroke-width="1.5"/><path d="M17.6 23 Q14.100000000000001 35 17.6 47" fill="none" stroke="#333a60" stroke-width="1.5"/><circle cx="37" cy="21" r="16" fill="#555"/><circle cx="37" cy="21" r="14" fill="url(#gs)" stroke="#000" stroke-width="2.5"/><path d="M25 24.5 Q37 27.3 49 24.5" fill="none" stroke="#333a60" stroke-width="1.5"/><path d="M35.6 9 Q32.1 21 35.6 33" fill="none" stroke="#333a60" stroke-width="1.5"/></g><g transform="translate(107.5,280) scale(1.0) translate(-28,-28)"><circle cx="37" cy="20" r="13" fill="#4a4a4a" stroke="#e6e6e6" stroke-width="2.5"/><circle cx="22" cy="35" r="16" fill="#555"/><circle cx="22" cy="35" r="14" fill="url(#gs)" stroke="#000" stroke-width="2.5"/><path d="M10 38.5 Q22 41.3 34 38.5" fill="none" stroke="#333a60" stroke-width="1.5"/><path d="M20.6 23 Q17.1 35 20.6 47" fill="none" stroke="#333a60" stroke-width="1.5"/><path d="M25 22 Q35 26 34 37 Q30 26 25 22Z" fill="#1428a0"/></g><g transform="translate(163.4,280) scale(1.0) translate(-28,-28)"><circle cx="35" cy="20" r="13" fill="#4a4a4a" stroke="#e6e6e6" stroke-width="2.5"/><circle cx="20" cy="36" r="13" fill="#4a4a4a" stroke="#e6e6e6" stroke-width="2.5"/><ellipse cx="27" cy="28" rx="5" ry="10" transform="rotate(-40 27 28)" fill="url(#gs)" stroke="#000" stroke-width="2"/></g><g transform="translate(219.4,280) scale(1.0) translate(-28,-28)"><circle cx="36" cy="19" r="14" fill="#555"/><circle cx="36" cy="19" r="12" fill="url(#gs)" stroke="#000" stroke-width="2.5"/><circle cx="19" cy="37" r="14" fill="#555"/><circle cx="19" cy="37" r="12" fill="url(#gs)" stroke="#000" stroke-width="2.5"/></g><g transform="translate(285.3,280) scale(1.15) translate(-28,-28)"><polygon points="28,13 45,21.5 45,38.5 28,47 11,38.5 11,21.5" fill="none" stroke="#555" stroke-width="6" stroke-linejoin="round"/><polygon points="28,13 45,21.5 28,30 11,21.5" fill="#b4c0ff"/><polygon points="11,21.5 28,30 28,47 11,38.5" fill="#6f83f3"/><polygon points="28,30 45,21.5 45,38.5 28,47" fill="#3445bd"/><polygon points="28,13 45,21.5 45,38.5 28,47 11,38.5 11,21.5" fill="none" stroke="#000" stroke-width="2.5" stroke-linejoin="round"/></g><g transform="translate(341.2,280) scale(1.0) translate(-28,-28)"><polygon points="28,8 46,18 44,40 28,48 12,38 12,18" fill="#3445bd" stroke="#000" stroke-width="2.5"/><polygon points="28,15 39,22 38,36 28,41 18,35 18,22" fill="#9fb0ff" stroke="#222" stroke-width="1.5"/></g><g transform="translate(397.1,280) scale(1.15) translate(-28,-28)"><polygon points="22,16 34,22.0 34,34.0 22,40 10,34.0 10,22.0" fill="none" stroke="#555" stroke-width="6" stroke-linejoin="round"/><polygon points="22,16 34,22.0 22,28 10,22.0" fill="#fafafa"/><polygon points="10,22.0 22,28 22,40 10,34.0" fill="#e6e6e6"/><polygon points="22,28 34,22.0 34,34.0 22,40" fill="#bdbdbd"/><polygon points="22,16 34,22.0 34,34.0 22,40 10,34.0 10,22.0" fill="none" stroke="#000" stroke-width="2.5" stroke-linejoin="round"/><polygon points="38,22 46,17 46,42 38,47" fill="#3445bd" stroke="#000" stroke-width="2"/></g><g transform="translate(454.5,280) scale(1.15) translate(-28,-28)"><polygon points="14,16 34,10 46,18 26,24" fill="#b4c0ff" stroke="#000" stroke-width="2"/><polygon points="28,22 42,29.0 42,43.0 28,50 14,43.0 14,29.0" fill="none" stroke="#555" stroke-width="6" stroke-linejoin="round"/><polygon points="28,22 42,29.0 28,36 14,29.0" fill="#9a9a9a"/><polygon points="14,29.0 28,36 28,50 14,43.0" fill="#f2f2f2"/><polygon points="28,36 42,29.0 42,43.0 28,50" fill="#c8c8c8"/><polygon points="28,22 42,29.0 42,43.0 28,50 14,43.0 14,29.0" fill="none" stroke="#000" stroke-width="2.5" stroke-linejoin="round"/></g><g transform="translate(509,280) scale(1.15) translate(-28,-28)"><polygon points="28,13 45,21.5 45,38.5 28,47 11,38.5 11,21.5" fill="none" stroke="#555" stroke-width="6" stroke-linejoin="round"/><polygon points="28,13 45,21.5 28,30 11,21.5" fill="#b4c0ff"/><polygon points="11,21.5 28,30 28,47 11,38.5" fill="#6f83f3"/><polygon points="28,30 45,21.5 45,38.5 28,47" fill="#3445bd"/><polygon points="28,13 45,21.5 45,38.5 28,47 11,38.5 11,21.5" fill="none" stroke="#000" stroke-width="2.5" stroke-linejoin="round"/></g><g transform="translate(566.3,280) scale(1.15) translate(-28,-28)"><g stroke="#000" stroke-width="2.2" fill="#7183f5"><path d="M10 18 h6 a4 4 0 1 1 8 0 h4 v6 a4 4 0 1 1 0 8 v4 h-18z" transform="rotate(-20 20 24)"/><path d="M28 30 h6 a4 4 0 1 1 8 0 h4 v6 a4 4 0 1 1 0 8 v4 h-18z" transform="rotate(20 37 38)"/></g></g><g transform="translate(629.4,280) scale(1.15) translate(-28,-28)"><polygon points="28,15 44,23.0 44,39.0 28,47 12,39.0 12,23.0" fill="none" stroke="#555" stroke-width="6" stroke-linejoin="round"/><polygon points="28,15 44,23.0 28,31 12,23.0" fill="#b4c0ff"/><polygon points="12,23.0 28,31 28,47 12,39.0" fill="#6f83f3"/><polygon points="28,31 44,23.0 44,39.0 28,47" fill="#3445bd"/><polygon points="28,15 44,23.0 44,39.0 28,47 12,39.0 12,23.0" fill="none" stroke="#000" stroke-width="2.5" stroke-linejoin="round"/><path d="M26 12 L40 6 H50 V16 H40 L30 22Z" fill="#fff" stroke="#000" stroke-width="1.5"/><rect x="47" y="6" width="5" height="10" fill="#000"/></g><g transform="translate(686.7,280) scale(1.15) translate(-28,-28)"><polygon points="28,15 44,23.0 44,39.0 28,47 12,39.0 12,23.0" fill="none" stroke="#555" stroke-width="6" stroke-linejoin="round"/><polygon points="28,15 44,23.0 28,31 12,23.0" fill="#b4c0ff"/><polygon points="12,23.0 28,31 28,47 12,39.0" fill="#6f83f3"/><polygon points="28,31 44,23.0 44,39.0 28,47" fill="#3445bd"/><polygon points="28,15 44,23.0 44,39.0 28,47 12,39.0 12,23.0" fill="none" stroke="#000" stroke-width="2.5" stroke-linejoin="round"/><path d="M12 16 L28 22 Q30 32 28 47" fill="none" stroke="#000" stroke-width="1.5"/></g><g transform="translate(743,280) scale(1.15) translate(-28,-28)"><polygon points="28,15 44,23.0 44,39.0 28,47 12,39.0 12,23.0" fill="none" stroke="#555" stroke-width="6" stroke-linejoin="round"/><polygon points="28,15 44,23.0 28,31 12,23.0" fill="#b4c0ff"/><polygon points="12,23.0 28,31 28,47 12,39.0" fill="#6f83f3"/><polygon points="28,31 44,23.0 44,39.0 28,47" fill="#3445bd"/><polygon points="28,15 44,23.0 44,39.0 28,47 12,39.0 12,23.0" fill="none" stroke="#000" stroke-width="2.5" stroke-linejoin="round"/><path d="M12 20 L34 16 L28 46 M34 16 L44 22" fill="none" stroke="#000" stroke-width="1.5"/></g><g transform="translate(810.4,280) scale(1.15) translate(-28,-28)"><polygon points="28,16 43,23.5 43,38.5 28,46 13,38.5 13,23.5" fill="none" stroke="#555" stroke-width="6" stroke-linejoin="round"/><polygon points="28,16 43,23.5 28,31 13,23.5" fill="#b4c0ff"/><polygon points="13,23.5 28,31 28,46 13,38.5" fill="#6f83f3"/><polygon points="28,31 43,23.5 43,38.5 28,46" fill="#3445bd"/><polygon points="28,16 43,23.5 43,38.5 28,46 13,38.5 13,23.5" fill="none" stroke="#000" stroke-width="2.5" stroke-linejoin="round"/><path d="M6 36 Q28 20 52 34" fill="none" stroke="#000" stroke-width="7"/><path d="M6 36 Q28 20 52 34" fill="none" stroke="#fff" stroke-width="4"/></g><g transform="translate(864.9,280) scale(1.15) translate(-28,-28)"><polygon points="24,16 39,23.5 39,38.5 24,46 9,38.5 9,23.5" fill="none" stroke="#555" stroke-width="6" stroke-linejoin="round"/><polygon points="24,16 39,23.5 24,31 9,23.5" fill="#b4c0ff"/><polygon points="9,23.5 24,31 24,46 9,38.5" fill="#6f83f3"/><polygon points="24,31 39,23.5 39,38.5 24,46" fill="#3445bd"/><polygon points="24,16 39,23.5 39,38.5 24,46 9,38.5 9,23.5" fill="none" stroke="#000" stroke-width="2.5" stroke-linejoin="round"/><polygon points="25,18 37,12 37,40 25,48" fill="none" stroke="#fff" stroke-width="4"/><path d="M30 32 H48 M43 27 L49 32 L43 37" fill="none" stroke="#ddd" stroke-width="2.5"/></g><g transform="translate(920.8,280) scale(1.15) translate(-28,-28)"><polygon points="20,19 31,24.5 31,35.5 20,41 9,35.5 9,24.5" fill="none" stroke="#555" stroke-width="6" stroke-linejoin="round"/><polygon points="20,19 31,24.5 20,30 9,24.5" fill="#b4c0ff"/><polygon points="9,24.5 20,30 20,41 9,35.5" fill="#6f83f3"/><polygon points="20,30 31,24.5 31,35.5 20,41" fill="#3445bd"/><polygon points="20,19 31,24.5 31,35.5 20,41 9,35.5 9,24.5" fill="none" stroke="#000" stroke-width="2.5" stroke-linejoin="round"/><polygon points="22,16 28,12 28,38 22,42" fill="none" stroke="#fff" stroke-width="3"/><polygon points="38,26 46,20 46,44 38,50" fill="#3445bd" stroke="#333" stroke-width="2"/></g><g transform="translate(976.7,280) scale(1.15) translate(-28,-28)"><polygon points="22,15 35,21.5 35,34.5 22,41 9,34.5 9,21.5" fill="none" stroke="#555" stroke-width="6" stroke-linejoin="round"/><polygon points="22,15 35,21.5 22,28 9,21.5" fill="#b4c0ff"/><polygon points="9,21.5 22,28 22,41 9,34.5" fill="#6f83f3"/><polygon points="22,28 35,21.5 35,34.5 22,41" fill="#3445bd"/><polygon points="22,15 35,21.5 35,34.5 22,41 9,34.5 9,21.5" fill="none" stroke="#000" stroke-width="2.5" stroke-linejoin="round"/><polygon points="30,20 40,15 50,20 50,38 40,44 30,38" fill="none" stroke="#fff" stroke-width="2"/><path d="M30 20 L40 26 L50 20 M40 26 V44" fill="none" stroke="#fff" stroke-width="2"/></g><g transform="translate(1034,280) scale(1.15) translate(-28,-28)"><polygon points="28,15 44,23.0 44,39.0 28,47 12,39.0 12,23.0" fill="none" stroke="#555" stroke-width="6" stroke-linejoin="round"/><polygon points="28,15 44,23.0 28,31 12,23.0" fill="#b4c0ff"/><polygon points="12,23.0 28,31 28,47 12,39.0" fill="#6f83f3"/><polygon points="28,31 44,23.0 44,39.0 28,47" fill="#3445bd"/><polygon points="28,15 44,23.0 44,39.0 28,47 12,39.0 12,23.0" fill="none" stroke="#000" stroke-width="2.5" stroke-linejoin="round"/><polygon points="28,20 40,14 44,24 44,46 32,52 28,42" fill="#c8c8c8" stroke="#fff" stroke-width="2"/><path d="M14 30 H34 M29 25 L35 30 L29 35" fill="none" stroke="#000" stroke-width="3"/></g><g transform="translate(1098.6,280) scale(1.15) translate(-28,-28)"><polygon points="28,15 44,23.0 44,39.0 28,47 12,39.0 12,23.0" fill="none" stroke="#555" stroke-width="6" stroke-linejoin="round"/><polygon points="28,15 44,23.0 28,31 12,23.0" fill="#b4c0ff"/><polygon points="12,23.0 28,31 28,47 12,39.0" fill="#6f83f3"/><polygon points="28,31 44,23.0 44,39.0 28,47" fill="#3445bd"/><polygon points="28,15 44,23.0 44,39.0 28,47 12,39.0 12,23.0" fill="none" stroke="#000" stroke-width="2.5" stroke-linejoin="round"/><rect x="24.5" y="8.5" width="7" height="7" fill="#fff" stroke="#000" stroke-width="2"/><rect x="40.5" y="15.5" width="7" height="7" fill="#fff" stroke="#000" stroke-width="2"/><rect x="40.5" y="34.5" width="7" height="7" fill="#fff" stroke="#000" stroke-width="2"/><rect x="24.5" y="43.5" width="7" height="7" fill="#fff" stroke="#000" stroke-width="2"/><rect x="8.5" y="34.5" width="7" height="7" fill="#fff" stroke="#000" stroke-width="2"/><rect x="8.5" y="16.5" width="7" height="7" fill="#fff" stroke="#000" stroke-width="2"/><rect x="24.5" y="24.5" width="7" height="7" fill="#fff" stroke="#000" stroke-width="2"/></g><g transform="translate(1155.9,280) scale(1.15) translate(-28,-28)"><polygon points="24,16 39,23.5 39,38.5 24,46 9,38.5 9,23.5" fill="none" stroke="#555" stroke-width="6" stroke-linejoin="round"/><polygon points="24,16 39,23.5 24,31 9,23.5" fill="#b4c0ff"/><polygon points="9,23.5 24,31 24,46 9,38.5" fill="#6f83f3"/><polygon points="24,31 39,23.5 39,38.5 24,46" fill="#3445bd"/><polygon points="24,16 39,23.5 39,38.5 24,46 9,38.5 9,23.5" fill="none" stroke="#000" stroke-width="2.5" stroke-linejoin="round"/><path d="M20 22 V48 M20 35 H46 M41 30 L47 35 L41 40" fill="none" stroke="#fff" stroke-width="3"/><rect x="16.5" y="18.5" width="7" height="7" fill="#fff" stroke="#000" stroke-width="2"/><rect x="16.5" y="44.5" width="7" height="7" fill="#fff" stroke="#000" stroke-width="2"/></g><g transform="translate(1211.8,280) scale(1.15) translate(-28,-28)"><polygon points="30,16 45,23.5 45,38.5 30,46 15,38.5 15,23.5" fill="none" stroke="#555" stroke-width="6" stroke-linejoin="round"/><polygon points="30,16 45,23.5 30,31 15,23.5" fill="#b4c0ff"/><polygon points="15,23.5 30,31 30,46 15,38.5" fill="#6f83f3"/><polygon points="30,31 45,23.5 45,38.5 30,46" fill="#3445bd"/><polygon points="30,16 45,23.5 45,38.5 30,46 15,38.5 15,23.5" fill="none" stroke="#000" stroke-width="2.5" stroke-linejoin="round"/><path d="M8 20 L46 45" stroke="#000" stroke-width="6"/><path d="M8 20 L46 45" stroke="#fff" stroke-width="3"/><rect x="4.5" y="16.5" width="7" height="7" fill="#fff" stroke="#000" stroke-width="2"/><rect x="42.5" y="41.5" width="7" height="7" fill="#fff" stroke="#000" stroke-width="2"/></g><g transform="translate(1267.7,280) scale(1.15) translate(-28,-28)"><polygon points="10,30 28,22 46,30 46,42 28,50 10,42" fill="#6f83f3" stroke="#000" stroke-width="2.5"/><polygon points="10,30 28,22 46,30 28,38" fill="#b4c0ff"/><path d="M18 26 Q22 12 34 14" fill="none" stroke="#ddd" stroke-width="2.5"/><rect x="40.5" y="10.5" width="7" height="7" fill="#fff" stroke="#000" stroke-width="2"/><rect x="12.5" y="40.5" width="7" height="7" fill="#fff" stroke="#000" stroke-width="2"/><path d="M12 32 L44 16" stroke="#fff" stroke-width="3"/></g><g transform="translate(1323.7,280) scale(1.0) translate(-28,-28)"><rect x="12" y="12" width="34" height="34" fill="#7a8cf5" stroke="#000" stroke-width="3"/><rect x="20" y="20" width="18" height="18" fill="none" stroke="#fff" stroke-width="2.5"/><path d="M29 12 V46 M12 29 H46" stroke="#444" stroke-width="1"/></g><g transform="translate(1388.2,280) scale(1.15) translate(-28,-28)"><polygon points="10,14 18,9 46,19 46,46 38,51 10,41" fill="none" stroke="#555" stroke-width="6" stroke-linejoin="round"/><polygon points="10,14 18,9 46,19 38,24" fill="#b4c0ff"/><polygon points="10,14 38,24 38,51 10,41" fill="#6f83f3"/><polygon points="38,24 46,19 46,46 38,51" fill="#3445bd"/><polygon points="10,14 18,9 46,19 46,46 38,51 10,41" fill="none" stroke="#000" stroke-width="2.5" stroke-linejoin="round"/><ellipse cx="24" cy="32" rx="8" ry="9" transform="rotate(20 24 32)" fill="#3040a8" stroke="#222" stroke-width="1.5"/></g><g transform="translate(1445.9,280) scale(1.15) translate(-28,-28)"><polygon points="10,14 18,9 46,19 46,46 38,51 10,41" fill="none" stroke="#555" stroke-width="6" stroke-linejoin="round"/><polygon points="10,14 18,9 46,19 38,24" fill="#b4c0ff"/><polygon points="10,14 38,24 38,51 10,41" fill="#6f83f3"/><polygon points="38,24 46,19 46,46 38,51" fill="#3445bd"/><polygon points="10,14 18,9 46,19 46,46 38,51 10,41" fill="none" stroke="#000" stroke-width="2.5" stroke-linejoin="round"/><rect x="4" y="22" width="22" height="16" transform="rotate(15 15 30)" fill="none" stroke="#fff" stroke-width="4"/></g><g transform="translate(1503.2,280) scale(1.15) translate(-28,-28)"><polygon points="10,14 18,9 46,19 46,46 38,51 10,41" fill="none" stroke="#555" stroke-width="6" stroke-linejoin="round"/><polygon points="10,14 18,9 46,19 38,24" fill="#b4c0ff"/><polygon points="10,14 38,24 38,51 10,41" fill="#6f83f3"/><polygon points="38,24 46,19 46,46 38,51" fill="#3445bd"/><polygon points="10,14 18,9 46,19 46,46 38,51 10,41" fill="none" stroke="#000" stroke-width="2.5" stroke-linejoin="round"/><path d="M18 18 Q24 24 30 20 L27 30 V46 H22 V30Z" fill="#dde4ff" stroke="#fff" stroke-width="2"/></g><g transform="translate(1559.1,280) scale(1.15) translate(-28,-28)"><polygon points="10,14 18,9 46,19 46,46 38,51 10,41" fill="none" stroke="#555" stroke-width="6" stroke-linejoin="round"/><polygon points="10,14 18,9 46,19 38,24" fill="#b4c0ff"/><polygon points="10,14 38,24 38,51 10,41" fill="#6f83f3"/><polygon points="38,24 46,19 46,46 38,51" fill="#3445bd"/><polygon points="10,14 18,9 46,19 46,46 38,51 10,41" fill="none" stroke="#000" stroke-width="2.5" stroke-linejoin="round"/><rect x="18" y="20" width="10" height="10" fill="none" stroke="#000" stroke-width="2"/><path d="M16 38 L40 46" stroke="#000" stroke-width="2.5"/></g><g transform="translate(1613.6,280) scale(1.15) translate(-28,-28)"><polygon points="10,14 18,9 46,19 46,46 38,51 10,41" fill="none" stroke="#555" stroke-width="6" stroke-linejoin="round"/><polygon points="10,14 18,9 46,19 38,24" fill="#b4c0ff"/><polygon points="10,14 38,24 38,51 10,41" fill="#6f83f3"/><polygon points="38,24 46,19 46,46 38,51" fill="#3445bd"/><polygon points="10,14 18,9 46,19 46,46 38,51 10,41" fill="none" stroke="#000" stroke-width="2.5" stroke-linejoin="round"/><rect x="18" y="20" width="10" height="10" fill="none" stroke="#000" stroke-width="2"/><path d="M16 36 Q30 50 42 28" fill="none" stroke="#000" stroke-width="2.5"/></g><g transform="translate(1672.4,280) scale(1.0) translate(-28,-28)"><rect x="11" y="12" width="36" height="34" fill="#8fa0ff" stroke="#000" stroke-width="2.5"/><circle cx="22" cy="20" r="3.5" fill="#444" stroke="#000"/><circle cx="32" cy="20" r="3.5" fill="#444" stroke="#000"/><circle cx="42" cy="30" r="3.5" fill="#444" stroke="#000"/><circle cx="32" cy="40" r="3.5" fill="#444" stroke="#000"/><circle cx="22" cy="40" r="3.5" fill="#444" stroke="#000"/><circle cx="14" cy="30" r="3.5" fill="#444" stroke="#000"/></g><g transform="translate(1728.3,280) scale(1.0) translate(-28,-28)"><rect x="11" y="12" width="36" height="34" fill="#8fa0ff" stroke="#555" stroke-width="2.5"/><circle cx="19" cy="20" r="3.3" fill="#444" stroke="#000"/><circle cx="19" cy="30" r="3.3" fill="#444" stroke="#000"/><circle cx="19" cy="40" r="3.3" fill="#444" stroke="#000"/><circle cx="29" cy="20" r="3.3" fill="#444" stroke="#000"/><circle cx="29" cy="30" r="3.3" fill="#444" stroke="#000"/><circle cx="29" cy="40" r="3.3" fill="#444" stroke="#000"/><circle cx="39" cy="20" r="3.3" fill="#444" stroke="#000"/><circle cx="39" cy="30" r="3.3" fill="#444" stroke="#000"/><circle cx="39" cy="40" r="3.3" fill="#444" stroke="#000"/></g><g transform="translate(1781.4,280) scale(1.0) translate(-28,-28)"><polygon points="12,14 42,22 44,46 14,38" fill="#7183f5" stroke="#000" stroke-width="2.5"/><path d="M18 24 L38 40 M36 22 L20 42" stroke="#e00" stroke-width="3.5"/></g><g transform="translate(1837.3,280) scale(1.0) translate(-28,-28)"><path d="M16 28 L40 28 L37 48 Q28 52 19 48Z" fill="#ddd" stroke="#000" stroke-width="2"/><rect x="18" y="10" width="18" height="18" transform="rotate(-8 27 19)" fill="#7183f5" stroke="#fff" stroke-width="3"/></g><g transform="translate(1893.2,280) scale(1.0) translate(-28,-28)"><path d="M10 22 a4 4 0 1 1 8 0 a4 4 0 1 1 -8 0 M14 26 L22 32 L18 46 M36 20 a5 5 0 1 1 10 0 a5 5 0 1 1 -10 0 M40 26 L32 34 L44 48" stroke="#1a1a1a" stroke-width="4" fill="#1a1a1a"/><rect x="24" y="8" width="7" height="40" fill="#7183f5" stroke="#000" stroke-width="2"/></g></g><line x1="253.8" y1="254" x2="253.8" y2="308" stroke="#8a8a8a" stroke-width="1.5"/><line x1="599.4" y1="254" x2="599.4" y2="308" stroke="#8a8a8a" stroke-width="1.5"/><line x1="777.4" y1="254" x2="777.4" y2="308" stroke="#8a8a8a" stroke-width="1.5"/><line x1="1067.9" y1="254" x2="1067.9" y2="308" stroke="#8a8a8a" stroke-width="1.5"/><line x1="1357.5" y1="254" x2="1357.5" y2="308" stroke="#8a8a8a" stroke-width="1.5"/></svg>
<div style="position:absolute;left:4px;top:314px;width:212px;height:672px;background:#323232;border-radius:10px 10px 0 0;"></div>
<div style="position:absolute;left:4px;top:332px;width:212px;height:2px;background:#434343;"></div>
<svg style="position:absolute;left:86px;top:318px;" width="10" height="10" viewBox="0 0 10 10"><circle cx="5" cy="5" r="3" fill="none" stroke="#8a8a8a" stroke-width="1.5"/></svg>
<svg style="position:absolute;left:98px;top:318px;" width="10" height="10" viewBox="0 0 10 10"><circle cx="5" cy="5" r="3" fill="none" stroke="#8a8a8a" stroke-width="1.5"/></svg>
<svg style="position:absolute;left:110px;top:318px;" width="10" height="10" viewBox="0 0 10 10"><circle cx="5" cy="5" r="3" fill="none" stroke="#8a8a8a" stroke-width="1.5"/></svg>
<svg style="position:absolute;left:122px;top:318px;" width="10" height="10" viewBox="0 0 10 10"><circle cx="5" cy="5" r="3" fill="none" stroke="#8a8a8a" stroke-width="1.5"/></svg>
<svg style="position:absolute;left:0px;top:0px;" width="220" height="800" viewBox="0 0 220 800"><g filter="url(#halo)"><path d="M22.6 345.4 L22.6 374 L30.5 367 L35.5 377 L40 374 L35 364 L42 364Z" fill="#fff" stroke="#5a5a5a" stroke-width="5" stroke-linejoin="round"/><path d="M22.6 345.4 L22.6 374 L30.5 367 L35.5 377 L40 374 L35 364 L42 364Z" fill="#fff" stroke="#111" stroke-width="2" stroke-linejoin="round"/><rect x="71" y="366" width="13" height="13" fill="#e8e8e8" stroke="#5a5a5a" stroke-width="5"/><rect x="71" y="366" width="13" height="13" fill="#e8e8e8" stroke="#111" stroke-width="2"/><rect x="93" y="341" width="14" height="14" fill="#8fa0ff" stroke="#5a5a5a" stroke-width="5"/><rect x="93" y="341" width="14" height="14" fill="#8fa0ff" stroke="#111" stroke-width="2"/><path d="M84 365 L93 356 M87 356 H93 V362" stroke="#eee" stroke-width="2" fill="none"/><rect x="146" y="366" width="16" height="11" transform="rotate(45 154 371.5)" fill="none" stroke="#5a5a5a" stroke-width="5"/><rect x="146" y="366" width="16" height="11" transform="rotate(45 154 371.5)" fill="none" stroke="#111" stroke-width="2"/><rect x="122" y="361" width="21" height="12" fill="#fff" stroke="#5a5a5a" stroke-width="5"/><rect x="122" y="361" width="21" height="12" fill="#fff" stroke="#111" stroke-width="2"/><path d="M141.5 343 L156 343 L142 372Z" fill="#13207a" stroke="#5a5a5a" stroke-width="1"/><rect x="12" y="420" width="38" height="12" fill="#fff" stroke="#5a5a5a" stroke-width="5"/><rect x="12" y="420" width="38" height="12" fill="#fff" stroke="#111" stroke-width="2"/><path d="M31.5 403 L46 403 L32 432Z" fill="#13207a"/><path d="M68 399 h5 a3.5 3.5 0 1 1 7 0 h5 v5 a3.5 3.5 0 1 1 0 7 v5 h-5 a3.5 3.5 0 1 0 -7 0 h-5 v-5 a3.5 3.5 0 1 0 0 -7z" fill="none" stroke="#5a5a5a" stroke-width="5" transform="rotate(45 76.5 407.5)"/><path d="M68 399 h5 a3.5 3.5 0 1 1 7 0 h5 v5 a3.5 3.5 0 1 1 0 7 v5 h-5 a3.5 3.5 0 1 0 -7 0 h-5 v-5 a3.5 3.5 0 1 0 0 -7z" fill="url(#go)" stroke="#000" stroke-width="2" transform="rotate(45 76.5 407.5)"/><path d="M85 415 h5 a3.5 3.5 0 1 1 7 0 h5 v5 a3.5 3.5 0 1 1 0 7 v5 h-5 a3.5 3.5 0 1 0 -7 0 h-5 v-5 a3.5 3.5 0 1 0 0 -7z" fill="none" stroke="#5a5a5a" stroke-width="5" transform="rotate(45 93.5 423.5)"/><path d="M85 415 h5 a3.5 3.5 0 1 1 7 0 h5 v5 a3.5 3.5 0 1 1 0 7 v5 h-5 a3.5 3.5 0 1 0 -7 0 h-5 v-5 a3.5 3.5 0 1 0 0 -7z" fill="#fff" stroke="#000" stroke-width="2" transform="rotate(45 93.5 423.5)"/><path d="M122 440 L122 417 L130 400 L132 428 L158 398 L146 427 L165 430 L147 436 L152 440Z" fill="url(#go)" stroke="#5a5a5a" stroke-width="5" stroke-linejoin="round"/><path d="M122 440 L122 417 L130 400 L132 428 L158 398 L146 427 L165 430 L147 436 L152 440Z" fill="url(#go)" stroke="#111" stroke-width="2.2" stroke-linejoin="round"/><polygon points="31,457 48,465.5 48,482.5 31,491 14,482.5 14,465.5" fill="none" stroke="#555" stroke-width="6" stroke-linejoin="round"/><polygon points="31,457 48,465.5 31,474 14,465.5" fill="#b4c0ff"/><polygon points="14,465.5 31,474 31,491 14,482.5" fill="#6f83f3"/><polygon points="31,474 48,465.5 48,482.5 31,491" fill="#3445bd"/><polygon points="31,457 48,465.5 48,482.5 31,491 14,482.5 14,465.5" fill="none" stroke="#000" stroke-width="2.5" stroke-linejoin="round"/><polygon points="88,457 105,465.5 105,482.5 88,491 71,482.5 71,465.5" fill="none" stroke="#555" stroke-width="6" stroke-linejoin="round"/><polygon points="88,457 105,465.5 88,474 71,465.5" fill="#b4c0ff"/><polygon points="71,465.5 88,474 88,491 71,482.5" fill="#6f83f3"/><polygon points="88,474 105,465.5 105,482.5 88,491" fill="#3445bd"/><polygon points="88,457 105,465.5 105,482.5 88,491 71,482.5 71,465.5" fill="none" stroke="#000" stroke-width="2.5" stroke-linejoin="round"/><path d="M73 486 L104 461" stroke="#222" stroke-width="1.5"/><rect x="68.5" y="480.5" width="7" height="7" fill="#fff" stroke="#000" stroke-width="2"/><rect x="100.5" y="456.5" width="7" height="7" fill="#fff" stroke="#000" stroke-width="2"/><circle cx="143" cy="472" r="19" fill="#555"/><circle cx="143" cy="472" r="17" fill="url(#gs)" stroke="#000" stroke-width="2.5"/><path d="M128 476.25 Q143 479.65 158 476.25" fill="none" stroke="#333a60" stroke-width="1.5"/><path d="M141.3 457 Q137.05 472 141.3 487" fill="none" stroke="#333a60" stroke-width="1.5"/><circle cx="33" cy="531" r="18" fill="#555"/><circle cx="33" cy="531" r="16" fill="url(#gs)" stroke="#000" stroke-width="2.5"/><path d="M19 535.0 Q33 538.2 47 535.0" fill="none" stroke="#333a60" stroke-width="1.5"/><path d="M31.4 517 Q27.4 531 31.4 545" fill="none" stroke="#333a60" stroke-width="1.5"/><rect x="44.5" y="522.5" width="7" height="7" fill="#fff" stroke="#000" stroke-width="2"/><rect x="14.5" y="532.5" width="7" height="7" fill="#fff" stroke="#000" stroke-width="2"/><circle cx="88" cy="530" r="0"/><ellipse cx="88" cy="530" rx="20" ry="14" fill="#555"/><ellipse cx="88" cy="530" rx="18" ry="12" fill="url(#gs)" stroke="#000" stroke-width="2.5"/><path d="M78 541 Q84 526 96 521 M81 521 Q92 524 102 537" fill="none" stroke="#333a60" stroke-width="1.5"/><path d="M130 519 Q145 514 156 518 Q160 536 148 548 Q140 540 130 528Z" fill="#555" stroke="#555" stroke-width="5" stroke-linejoin="round"/><path d="M130 519 Q145 514 156 518 Q160 536 148 548 Q140 540 130 528Z" fill="url(#gc)" stroke="#000" stroke-width="2.5" stroke-linejoin="round"/><path d="M156 518 Q146 526 142 542" fill="none" stroke="#111" stroke-width="1.5"/><path d="M32 568 L47 598 Q32 606 17 598Z" fill="url(#gc)" stroke="#000" stroke-width="2.5"/><path d="M82 572 L94 572 L104 597 Q88 604 72 597Z" fill="url(#gc)" stroke="#000" stroke-width="2.5"/><path d="M143 568 L160 597 L143 604 L126 596Z" fill="#6f83f3" stroke="#000" stroke-width="2.5"/><path d="M14 648 L27 633 L38 633 L50 648 L32 657Z" fill="#6f83f3" stroke="#000" stroke-width="2.5"/><path d="M72 627 L104 627 L104 658 Q88 666 72 658Z" fill="url(#gc)" stroke="#000" stroke-width="2.5"/><ellipse cx="88" cy="628" rx="16" ry="6" fill="#c8d2ff" stroke="#000" stroke-width="1.5"/><path d="M127 627 L159 627 L159 658 Q143 666 127 658Z" fill="url(#gc)" stroke="#000" stroke-width="2.5"/><ellipse cx="143" cy="630" rx="16" ry="7" fill="#c8d2ff" stroke="#000" stroke-width="1.5"/><ellipse cx="143" cy="630" rx="8" ry="3.5" fill="#3445bd"/><ellipse cx="32" cy="698" rx="19" ry="12" fill="url(#gs)" stroke="#000" stroke-width="2.5"/><ellipse cx="32" cy="697" rx="7" ry="2.2" fill="#111"/><path d="M84.5 685 Q70 692 76 704 Q84 712 101 708" fill="none" stroke="#000" stroke-width="15" stroke-linecap="round"/><path d="M84.5 685 Q70 692 76 704 Q84 712 101 708" fill="none" stroke="url(#gs)" stroke-width="10" stroke-linecap="round"/><path d="M140.5 685 Q126 692 132 704 Q140 712 157 708" fill="none" stroke="#000" stroke-width="15" stroke-linecap="round"/><path d="M140.5 685 Q126 692 132 704 Q140 712 157 708" fill="none" stroke="url(#gs)" stroke-width="10" stroke-linecap="round"/><circle cx="142" cy="684.5" r="4" fill="#fff"/><circle cx="158" cy="708" r="4" fill="#fff"/><path d="M16 740 Q32 733 48 740 L48 767 Q32 760 16 767Z" fill="url(#gc)" stroke="#000" stroke-width="2.5"/><path d="M72 740 Q88 733 104 740 L104 767 Q88 760 72 767Z" fill="url(#gc)" stroke="#000" stroke-width="2.5"/><path d="M74 764 Q88 756 102 764 L102 767 Q88 772 74 767Z" fill="#fff"/><g transform="translate(143,754) scale(1.0) translate(-28,-28)"><polygon points="28,8 46,18 44,40 28,48 12,38 12,18" fill="#3445bd" stroke="#000" stroke-width="2.5"/><polygon points="28,15 39,22 38,36 28,41 18,35 18,22" fill="#9fb0ff" stroke="#222" stroke-width="1.5"/></g></g><path d="M105 386 L115 386 L115 376Z" fill="#9a9a9a"/><path d="M105 445 L115 445 L115 435Z" fill="#9a9a9a"/><path d="M49 502 L59 502 L59 492Z" fill="#9a9a9a"/><path d="M161 502 L171 502 L171 492Z" fill="#9a9a9a"/><path d="M105 558 L115 558 L115 548Z" fill="#9a9a9a"/><path d="M105 781 L115 781 L115 771Z" fill="#9a9a9a"/></svg>
<div style="position:absolute;left:4px;top:990px;width:212px;height:38px;background:#323232;border-radius:10px 10px 0 0;"></div>
<div style="position:absolute;left:5px;top:993.0px;height:32px;line-height:32px;font-size:23px;color:#9a9a9a;font-weight:400;white-space:pre;">Osnap</div>
<svg style="position:absolute;left:176px;top:989px;" width="40" height="40" viewBox="0 0 40 40"><path d="M31.81 17.89 L31.81 22.11 L28.44 21.85 L27.28 24.66 L29.84 26.86 L26.86 29.84 L24.66 27.28 L21.85 28.44 L22.11 31.81 L17.89 31.81 L18.15 28.44 L15.34 27.28 L13.14 29.84 L10.16 26.86 L12.72 24.66 L11.56 21.85 L8.19 22.11 L8.19 17.89 L11.56 18.15 L12.72 15.34 L10.16 13.14 L13.14 10.16 L15.34 12.72 L18.15 11.56 L17.89 8.19 L22.11 8.19 L21.85 11.56 L24.66 12.72 L26.86 10.16 L29.84 13.14 L27.28 15.34 L28.44 18.15Z" fill="#bdbdbd"/><circle cx="20" cy="20" r="3.84" fill="#323232"/></svg>
<div style="position:absolute;left:4px;top:1028px;width:212px;height:40px;background:#434343;"></div>
<div style="position:absolute;left:4px;top:1028px;width:72px;height:40px;background:#323232;border-radius:0 10px 0 0;"></div>
<svg style="position:absolute;left:4px;top:1028px;" width="212" height="40" viewBox="0 0 212 40"><circle cx="34.3" cy="20" r="14" fill="none" stroke="#a8a8a8" stroke-width="1.6"/><rect x="31" y="16.5" width="6.6" height="6.6" fill="none" stroke="#e0e0e0" stroke-width="1.8"/><line x1="37.6" y1="20" x2="52" y2="20" stroke="#e0e0e0" stroke-width="1.8"/><path d="M97 10 Q108 6 119 10 L111 22 L111 32 Q108 34 105 32 L105 22Z" fill="#c8c8c8" stroke="#111" stroke-width="1.5"/><path d="M96 28 v5 h5 M123 12 v-5 h-5" stroke="#ddd" stroke-width="1.5" fill="none"/></svg>
<div style="position:absolute;left:4px;top:1068px;width:212px;height:590px;background:#323232;"></div>
<div style="position:absolute;left:4px;top:1025.5px;width:178px;height:2.5px;background:#434343;"></div>
<svg style="position:absolute;left:70px;top:1054px;" width="20" height="20" viewBox="0 0 20 20"><path d="M6 6 V14 H14 A8 8 0 0 1 6 6Z" fill="#323232"/></svg>
<div style="position:absolute;left:48px;top:1075.5px;height:32px;line-height:32px;font-size:23.5px;color:#eeeeee;font-weight:400;white-space:pre;">End</div>
<div style="position:absolute;left:48px;top:1107.5px;height:32px;line-height:32px;font-size:23.5px;color:#eeeeee;font-weight:400;white-space:pre;">Near</div>
<div style="position:absolute;left:48px;top:1139.5px;height:32px;line-height:32px;font-size:23.5px;color:#eeeeee;font-weight:400;white-space:pre;">Point</div>
<div style="position:absolute;left:48px;top:1171.5px;height:32px;line-height:32px;font-size:23.5px;color:#eeeeee;font-weight:400;white-space:pre;">Mid</div>
<div style="position:absolute;left:48px;top:1203.5px;height:32px;line-height:32px;font-size:23.5px;color:#eeeeee;font-weight:400;white-space:pre;">Cen</div>
<div style="position:absolute;left:48px;top:1235.5px;height:32px;line-height:32px;font-size:23.5px;color:#eeeeee;font-weight:400;white-space:pre;">Int</div>
<div style="position:absolute;left:48px;top:1267.5px;height:32px;line-height:32px;font-size:23.5px;color:#eeeeee;font-weight:400;white-space:pre;">Perp</div>
<div style="position:absolute;left:48px;top:1299.5px;height:32px;line-height:32px;font-size:23.5px;color:#eeeeee;font-weight:400;white-space:pre;">Tan</div>
<div style="position:absolute;left:48px;top:1331.5px;height:32px;line-height:32px;font-size:23.5px;color:#eeeeee;font-weight:400;white-space:pre;">Quad</div>
<div style="position:absolute;left:48px;top:1363.5px;height:32px;line-height:32px;font-size:23.5px;color:#eeeeee;font-weight:400;white-space:pre;">Knot</div>
<div style="position:absolute;left:48px;top:1395.5px;height:32px;line-height:32px;font-size:23.5px;color:#eeeeee;font-weight:400;white-space:pre;">Vertex</div>
<div style="position:absolute;left:48px;top:1427.5px;height:32px;line-height:32px;font-size:23.5px;color:#eeeeee;font-weight:400;white-space:pre;">Project</div>
<div style="position:absolute;left:48px;top:1461.5px;height:32px;line-height:32px;font-size:23.5px;color:#eeeeee;font-weight:400;white-space:pre;">Disable</div>
<svg style="position:absolute;left:0px;top:0px;" width="220" height="1702" viewBox="0 0 220 1702"><rect x="11" y="1079.0" width="26" height="25" fill="#555" stroke="#7a7a7a" stroke-width="2"/><rect x="11" y="1111.0" width="26" height="25" fill="#555" stroke="#7a7a7a" stroke-width="2"/><path d="M16 1123.5 L22 1130.5 L32 1115.5" fill="none" stroke="#f2f2f2" stroke-width="3.2"/><rect x="11" y="1143.0" width="26" height="25" fill="#555" stroke="#7a7a7a" stroke-width="2"/><path d="M16 1155.5 L22 1162.5 L32 1147.5" fill="none" stroke="#f2f2f2" stroke-width="3.2"/><rect x="11" y="1175.0" width="26" height="25" fill="#555" stroke="#7a7a7a" stroke-width="2"/><path d="M16 1187.5 L22 1194.5 L32 1179.5" fill="none" stroke="#f2f2f2" stroke-width="3.2"/><rect x="11" y="1207.0" width="26" height="25" fill="#555" stroke="#7a7a7a" stroke-width="2"/><rect x="11" y="1239.0" width="26" height="25" fill="#555" stroke="#7a7a7a" stroke-width="2"/><path d="M16 1251.5 L22 1258.5 L32 1243.5" fill="none" stroke="#f2f2f2" stroke-width="3.2"/><rect x="11" y="1271.0" width="26" height="25" fill="#555" stroke="#7a7a7a" stroke-width="2"/><path d="M16 1283.5 L22 1290.5 L32 1275.5" fill="none" stroke="#f2f2f2" stroke-width="3.2"/><rect x="11" y="1303.0" width="26" height="25" fill="#555" stroke="#7a7a7a" stroke-width="2"/><rect x="11" y="1335.0" width="26" height="25" fill="#555" stroke="#7a7a7a" stroke-width="2"/><rect x="11" y="1367.0" width="26" height="25" fill="#555" stroke="#7a7a7a" stroke-width="2"/><path d="M16 1379.5 L22 1386.5 L32 1371.5" fill="none" stroke="#f2f2f2" stroke-width="3.2"/><rect x="11" y="1399.0" width="26" height="25" fill="#555" stroke="#7a7a7a" stroke-width="2"/><rect x="11" y="1431.0" width="26" height="25" fill="#555" stroke="#7a7a7a" stroke-width="2"/><rect x="11" y="1465.0" width="26" height="25" fill="#555" stroke="#7a7a7a" stroke-width="2"/></svg>
<div style="position:absolute;left:2832px;top:314px;width:48px;height:1303px;background:#434343;"></div>
<div style="position:absolute;left:2832px;top:314px;width:45px;height:22px;background:#323232;border-radius:10px 0 0 0;"></div>
<svg style="position:absolute;left:2837px;top:318px;" width="10" height="10" viewBox="0 0 10 10"><circle cx="5" cy="5" r="3" fill="none" stroke="#8a8a8a" stroke-width="1.5"/></svg>
<svg style="position:absolute;left:2849px;top:318px;" width="10" height="10" viewBox="0 0 10 10"><circle cx="5" cy="5" r="3" fill="none" stroke="#8a8a8a" stroke-width="1.5"/></svg>
<svg style="position:absolute;left:2861px;top:318px;" width="10" height="10" viewBox="0 0 10 10"><circle cx="5" cy="5" r="3" fill="none" stroke="#8a8a8a" stroke-width="1.5"/></svg>
<svg style="position:absolute;left:0px;top:0px;" width="2880" height="830" viewBox="0 0 2880 830"><g filter="url(#halo)"><path d="M2844 348.5 L2867 354.5 L2867 364.5 L2854 372.5 L2844 361.5Z" fill="#3040a8" stroke="#222" stroke-width="2.5" stroke-linejoin="round"/><path d="M2845 350.5 L2866 355.5 L2866 360.5 L2854 367.5 L2845 357.5Z" fill="#e0e0e0"/><path d="M2845 350.5 L2866 355.5 L2866 357.5 L2854 363.5 L2845 354.5Z" fill="#e02010"/><path d="M2845 349.5 L2866 354.5 L2854 360.5Z" fill="#ff7a50"/><circle cx="2855" cy="408" r="13" fill="#111"/><path d="M2855.00 398.00 A10 10 0 0 1 2863.66 403.00" fill="none" stroke="#ff0000" stroke-width="6"/><path d="M2863.66 403.00 A10 10 0 0 1 2863.66 413.00" fill="none" stroke="#ffff00" stroke-width="6"/><path d="M2863.66 413.00 A10 10 0 0 1 2855.00 418.00" fill="none" stroke="#00ff00" stroke-width="6"/><path d="M2855.00 418.00 A10 10 0 0 1 2846.34 413.00" fill="none" stroke="#00ffff" stroke-width="6"/><path d="M2846.34 413.00 A10 10 0 0 1 2846.34 403.00" fill="none" stroke="#0000ff" stroke-width="6"/><path d="M2846.34 403.00 A10 10 0 0 1 2855.00 398.00" fill="none" stroke="#ff00ff" stroke-width="6"/><circle cx="2855" cy="408" r="6.5" fill="#434343"/><defs><linearGradient id="dg" x1="0" y1="0" x2="0" y2="1"><stop offset="0" stop-color="#e8e8e8"/><stop offset="1" stop-color="#909090"/></linearGradient></defs><rect x="2841" y="442" width="29" height="24" fill="url(#dg)" stroke="#111" stroke-width="3.5"/><rect x="2850" y="466" width="11" height="4" fill="#111"/><rect x="2841" y="489" width="29" height="28" fill="#f4f4f4" stroke="#111" stroke-width="2"/><rect x="2842" y="490" width="27" height="3" fill="#7080e0"/><path d="M2843 515 L2843 507 A12.5 12.5 0 0 1 2868 507 L2868 515Z" fill="#4a64d0"/><text x="2849" y="514" font-size="21" font-weight="700" fill="#fff" font-family="Liberation Serif">?</text><path d="M2846 539 H2863 V561 H2846Z" fill="#fafafa" stroke="#222" stroke-width="2"/><path d="M2842 559 H2862 Q2866 562 2862 565 H2842 Q2839 562 2842 559Z" fill="#eee" stroke="#222" stroke-width="1.8"/><path d="M2849 544 h10 M2849 548 h8 M2849 552 h10" stroke="#777" stroke-width="1.3"/><path d="M2855 555 L2870 539" stroke="#222" stroke-width="7"/><path d="M2855 555 L2870 539" stroke="#ff7a1a" stroke-width="4.5"/><path d="M2843 609 Q2848 606 2847 597 Q2847 586 2855 586 Q2863 586 2863 597 Q2862 606 2867 609Z" fill="none" stroke="#ddd" stroke-width="1.6"/><path d="M2852 611 Q2855 614 2858 611" fill="none" stroke="#ddd" stroke-width="1.5"/><circle cx="2855" cy="584" r="1.5" fill="none" stroke="#ddd"/><rect x="2840" y="640" width="30" height="20" rx="3" fill="none" stroke="#ddd" stroke-width="1.6"/><rect x="2851" y="636" width="10" height="4" fill="none" stroke="#ddd" stroke-width="1.4"/><circle cx="2857" cy="650" r="7.5" fill="#333" stroke="#ddd" stroke-width="1.6"/><circle cx="2857" cy="650" r="4" fill="#556" /><path d="M2840 694 L2855 687 L2870 694 L2855 701Z" fill="none" stroke="#ddd" stroke-width="1.6"/><path d="M2846 697 V704 Q2855 708 2864 704 V697" fill="none" stroke="#ddd" stroke-width="1.6"/><path d="M2842 695 V706" stroke="#ddd" stroke-width="1.5"/><polygon points="2841,740 2849,734 2857,738 2857,750 2849,754 2841,748" fill="#eee" stroke="#111" stroke-width="1.5"/><path d="M2861 732 L2869 754 Q2861 758 2853 754Z" fill="#bbb" stroke="#111" stroke-width="1.5"/><rect x="2840" y="777" width="16" height="22" fill="#fafafa" stroke="#222" stroke-width="2"/><path d="M2843 782 h9 M2843 786 h9 M2843 790 h9" stroke="#777" stroke-width="1.2"/><path d="M2851 787 L2867 791 L2867 801 L2857 806 L2851 799Z" fill="#3040b0" stroke="#222" stroke-width="2"/><path d="M2851 790 L2867 794 L2867 797 L2857 802 L2851 796Z" fill="#e0e0e0"/><path d="M2851 787 L2867 791 L2867 794 L2857 799 L2851 793Z" fill="#ff6030"/></g></svg>
<div style="position:absolute;left:221px;top:1617px;width:2611px;height:41px;background:#434343;"></div>
<div style="position:absolute;left:221px;top:1617px;width:2611px;height:1px;background:#8a8a8a;"></div>
<svg style="position:absolute;left:219px;top:1617px;" width="160" height="41" viewBox="0 0 160 41"><path d="M1 0 V33 Q1 40 8 40 H150 Q157 40 157 33 V0" fill="#323232" stroke="#a0a0a0" stroke-width="1.2"/></svg>
<div style="position:absolute;left:243.7px;top:1623.0px;height:32px;line-height:32px;font-size:23.5px;color:#f2f2f2;font-weight:400;white-space:pre;">Perspective</div>
<div style="position:absolute;left:394.4px;top:1623.0px;height:32px;line-height:32px;font-size:23.5px;color:#8e8e8e;font-weight:400;white-space:pre;">Top</div>
<div style="position:absolute;left:467.7px;top:1623.0px;height:32px;line-height:32px;font-size:23.5px;color:#8e8e8e;font-weight:400;white-space:pre;">Left</div>
<div style="position:absolute;left:539.3px;top:1623.0px;height:32px;line-height:32px;font-size:23.5px;color:#8e8e8e;font-weight:400;white-space:pre;">Back</div>
<div style="position:absolute;left:619.6px;top:1623.0px;height:32px;line-height:32px;font-size:23.5px;color:#8e8e8e;font-weight:400;white-space:pre;">Page 1</div>
<div style="position:absolute;left:447.6px;top:1620px;width:1px;height:36px;background:#3a3a26;"></div>
<div style="position:absolute;left:519px;top:1620px;width:1px;height:36px;background:#3a3a26;"></div>
<div style="position:absolute;left:703px;top:1620px;width:1px;height:36px;background:#3a3a26;"></div>
<svg style="position:absolute;left:720px;top:1625px;" width="28" height="28" viewBox="0 0 28 28"><path d="M14 6 V22 M6 14 H22" stroke="#fff" stroke-width="3.2"/></svg>
<div style="position:absolute;left:0px;top:1658px;width:2880px;height:44px;background:#323232;"></div>
<svg style="position:absolute;left:12px;top:1664px;" width="32" height="32" viewBox="0 0 32 32"><rect x="2" y="2" width="27" height="27" fill="#c8c8c8"/><rect x="9" y="6" width="14" height="19" fill="#1e1e1e"/></svg>
<div style="position:absolute;left:83px;top:1666.5px;height:32px;line-height:32px;font-size:23.5px;color:#c8c8c8;font-weight:400;white-space:pre;">CPlane</div>
<div style="position:absolute;left:238px;top:1666.5px;height:32px;line-height:32px;font-size:23.5px;color:#c8c8c8;font-weight:400;white-space:pre;">x -13.83</div>
<div style="position:absolute;left:413px;top:1666.5px;height:32px;line-height:32px;font-size:23.5px;color:#c8c8c8;font-weight:400;white-space:pre;">y 34.10</div>
<div style="position:absolute;left:605px;top:1666.5px;height:32px;line-height:32px;font-size:23.5px;color:#c8c8c8;font-weight:400;white-space:pre;">z 0</div>
<div style="position:absolute;left:769px;top:1666.5px;height:32px;line-height:32px;font-size:23.5px;color:#c8c8c8;font-weight:400;white-space:pre;">Meters</div>
<div style="position:absolute;left:959.7px;top:1666.5px;height:32px;line-height:32px;font-size:23.5px;color:#c8c8c8;font-weight:400;white-space:pre;">desenhos/cotas</div>
<div style="position:absolute;left:1311.5px;top:1666.5px;height:32px;line-height:32px;font-size:23.5px;color:#c8c8c8;font-weight:400;white-space:pre;">Grid Snap</div>
<div style="position:absolute;left:1457px;top:1666.5px;height:32px;line-height:32px;font-size:23.5px;color:#c8c8c8;font-weight:400;white-space:pre;">Ortho</div>
<div style="position:absolute;left:1560.7px;top:1666.5px;height:32px;line-height:32px;font-size:23.5px;color:#c8c8c8;font-weight:400;white-space:pre;">Planar</div>
<svg style="position:absolute;left:912px;top:1664px;" width="34" height="34" viewBox="0 0 34 34"><rect x="2" y="2" width="30" height="30" fill="#000" stroke="#fff" stroke-width="2"/></svg>
<div style="position:absolute;left:1649px;top:1660px;width:102px;height:38px;background:#3e5490;border-radius:8px;"></div>
<div style="position:absolute;left:1921px;top:1660px;width:225px;height:38px;background:#3e5490;border-radius:8px;"></div>
<div style="position:absolute;left:1662px;top:1573px;width:1215px;height:118px;background:#434343;border:1.5px solid #9a9a9a;border-right:none;border-radius:4px 0 0 4px;"></div>
<div style="position:absolute;left:2839px;top:1692px;width:28px;height:2px;background:#c8c8c8;"></div>
<div style="position:absolute;left:1671px;top:1576px;width:188px;height:40px;background:#323232;border-radius:0 12px 0 0;"></div>
<div style="position:absolute;left:1671px;top:1616px;width:1199px;height:66px;background:#323232;"></div>
<svg style="position:absolute;left:1688px;top:1578px;" width="36" height="36" viewBox="0 0 36 36"><defs><radialGradient id="dsg" cx="0.5" cy="0.35" r="0.7"><stop offset="0" stop-color="#f4f6ff"/><stop offset="1" stop-color="#7c88d0"/></radialGradient></defs><circle cx="18" cy="17" r="14" fill="url(#dsg)" stroke="#111" stroke-width="1"/><path d="M8 14 L12 12 H28 V15 H20 V19 H28 V22 H12 L8 20Z" fill="#fff"/></svg>
<div style="position:absolute;left:1733px;top:1583.0px;height:32px;line-height:32px;font-size:23.5px;color:#f2f2f2;font-weight:400;white-space:pre;">Datasmith</div>
<svg style="position:absolute;left:2806px;top:1579px;" width="34" height="34" viewBox="0 0 34 34"><path d="M28.81 14.89 L28.81 19.11 L25.44 18.85 L24.28 21.66 L26.84 23.86 L23.86 26.84 L21.66 24.28 L18.85 25.44 L19.11 28.81 L14.89 28.81 L15.15 25.44 L12.34 24.28 L10.14 26.84 L7.16 23.86 L9.72 21.66 L8.56 18.85 L5.19 19.11 L5.19 14.89 L8.56 15.15 L9.72 12.34 L7.16 10.14 L10.14 7.16 L12.34 9.72 L15.15 8.56 L14.89 5.19 L19.11 5.19 L18.85 8.56 L21.66 9.72 L23.86 7.16 L26.84 10.14 L24.28 12.34 L25.44 15.15Z" fill="#bdbdbd"/><circle cx="17" cy="17" r="3.84" fill="#434343"/></svg>
<svg style="position:absolute;left:2845px;top:1584px;" width="24" height="24" viewBox="0 0 24 24"><path d="M5 5 L19 19 M19 5 L5 19" stroke="#777" stroke-width="3.2"/></svg>
<svg style="position:absolute;left:0px;top:0px;pointer-events:none;" width="2880" height="1702" viewBox="0 0 2880 1702"><path d="M1686 1649 A13 13 0 0 1 1702 1631" fill="none" stroke="#000" stroke-width="4"/><path d="M1700 1624 L1709 1631 L1700 1638Z" fill="#000"/><path d="M1710 1637 A13 13 0 0 1 1694 1655" fill="none" stroke="#000" stroke-width="4"/><path d="M1696 1662 L1687 1655 L1696 1648Z" fill="#000"/><path d="M1878 1649 A13 13 0 0 1 1894 1631" fill="none" stroke="#000" stroke-width="4"/><path d="M1892 1624 L1901 1631 L1892 1638Z" fill="#000"/><path d="M1902 1637 A13 13 0 0 1 1886 1655" fill="none" stroke="#000" stroke-width="4"/><path d="M1888 1662 L1879 1655 L1888 1648Z" fill="#000"/><path d="M1902 1650 L1910 1656 L1902 1662Z" fill="#000"/><rect x="2136" y="1626" width="20" height="20" rx="5" fill="#000"/><path d="M2140 1626 V1618 M2152 1626 V1618" stroke="#000" stroke-width="3.5"/><rect x="2143" y="1644" width="6" height="12" fill="#000"/><path d="M2366 1631 H2340 V1657 H2366" fill="none" stroke="#000" stroke-width="3.5"/><path d="M2352 1644 H2374 M2368 1638 L2374 1644 L2368 1650" fill="none" stroke="#000" stroke-width="3.5"/><path d="M2584 1625 H2600 L2610 1635 V1662 H2584Z" fill="none" stroke="#000" stroke-width="3.5"/><path d="M2590 1648 H2604 M2590 1654 H2600" stroke="#000" stroke-width="3"/><line x1="2325" y1="1618" x2="2325" y2="1682" stroke="#8a8a8a" stroke-width="1.5"/><line x1="2564" y1="1618" x2="2564" y2="1682" stroke="#8a8a8a" stroke-width="1.5"/></svg>
<div style="position:absolute;left:1728.5px;top:1631.0px;height:32px;line-height:32px;font-size:23.5px;color:#eeeeee;font-weight:400;white-space:pre;">Synchronize</div>
<div style="position:absolute;left:1924px;top:1631.0px;height:32px;line-height:32px;font-size:23.5px;color:#eeeeee;font-weight:400;white-space:pre;">Toggle Auto Sync</div>
<div style="position:absolute;left:2176px;top:1631.0px;height:32px;line-height:32px;font-size:23.5px;color:#eeeeee;font-weight:400;white-space:pre;">Connections</div>
<div style="position:absolute;left:2386px;top:1631.0px;height:32px;line-height:32px;font-size:23.5px;color:#eeeeee;font-weight:400;white-space:pre;">Export 3D View</div>
<div style="position:absolute;left:2626px;top:1631.0px;height:32px;line-height:32px;font-size:23.5px;color:#eeeeee;font-weight:400;white-space:pre;">Messages</div>
</body></html>
